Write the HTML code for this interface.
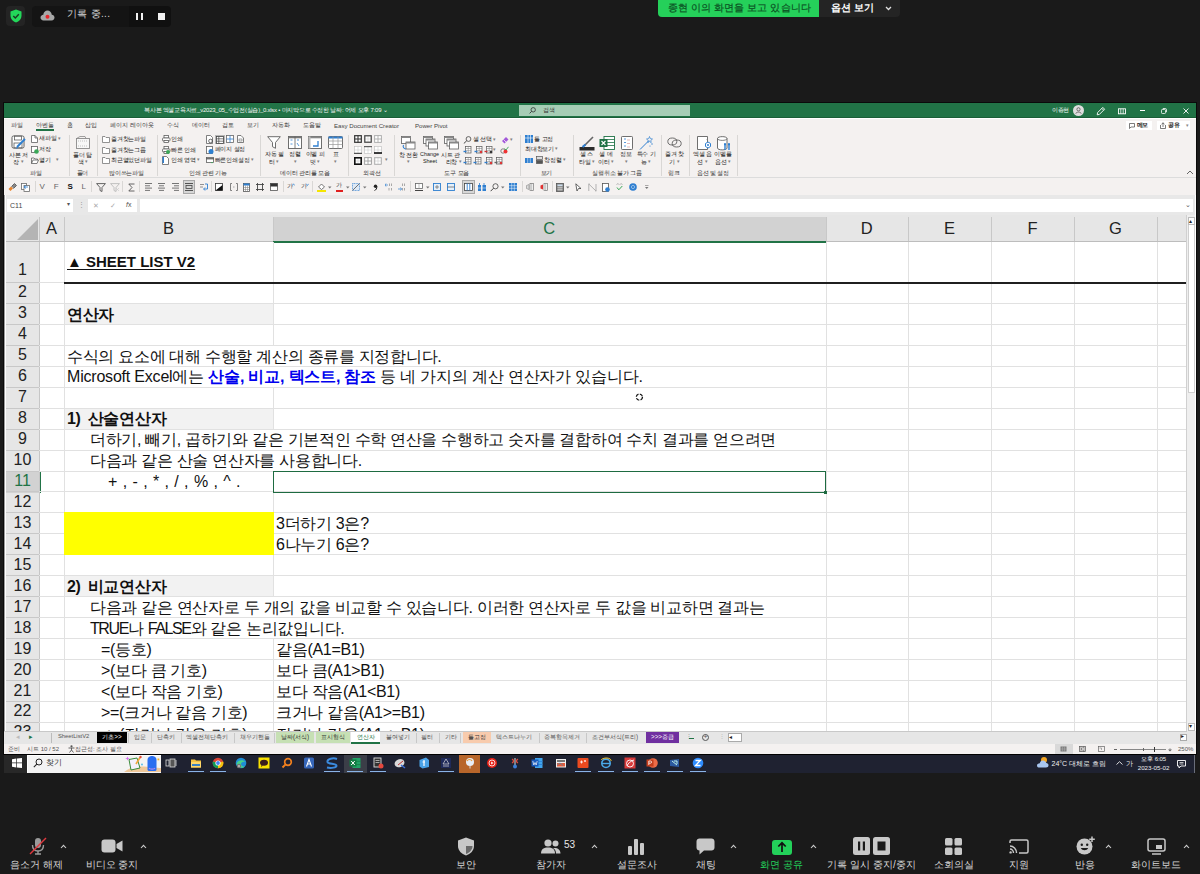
<!DOCTYPE html>
<html><head><meta charset="utf-8"><style>
html,body{margin:0;padding:0}
body{width:1200px;height:874px;overflow:hidden;background:#1a1a1a;position:relative;font-family:"Liberation Sans",sans-serif}
.a{position:absolute}
.t{position:absolute;white-space:nowrap;line-height:1}
</style></head><body>
<div class="a" style="left:6px;top:6px;width:19px;height:20px;background:#242424;border-radius:4px"></div>
<svg class="a" style="left:10px;top:9px" width="12" height="14" viewBox="0 0 12 14"><path d="M6 0.5 L11.5 2.5 V6.5 C11.5 10 9 12.5 6 13.5 C3 12.5 0.5 10 0.5 6.5 V2.5 Z" fill="#23d75a"/><path d="M3.3 7 L5.3 9 L8.8 5.2" stroke="#1a3a22" stroke-width="1.4" fill="none"/></svg>
<div class="a" style="left:32px;top:6px;width:97px;height:21px;background:#141414;border-radius:4px 0 0 4px"></div>
<div class="a" style="left:129px;top:6px;width:42px;height:21px;background:#101010;border-radius:0 4px 4px 0"></div>
<svg class="a" style="left:40px;top:10px" width="15" height="11" viewBox="0 0 15 11"><path d="M3.5 10.5 H11.5 C13.5 10.5 14.5 9 14.5 7.5 C14.5 6 13.3 4.8 11.8 4.8 C11.5 2.3 9.7 0.5 7.5 0.5 C5.3 0.5 3.5 2.3 3.3 4.8 C1.7 4.9 0.5 6.1 0.5 7.6 C0.5 9.2 1.8 10.5 3.5 10.5 Z" fill="#a8a8a8"/><circle cx="7.5" cy="6.8" r="2" fill="#e8262b"/></svg>
<div class="t" style="left:67px;top:9px;font-size:10px;color:#d6d6d6;font-weight:400;letter-spacing:0.3px">기록 중...</div>
<div class="a" style="left:136px;top:13px;width:2px;height:7px;background:#f0f0f0;"></div>
<div class="a" style="left:141px;top:13px;width:2px;height:7px;background:#f0f0f0;"></div>
<div class="a" style="left:158px;top:13px;width:7px;height:7px;background:#f0f0f0;"></div>
<div class="a" style="left:658px;top:0px;width:161px;height:17px;background:#25d05a;border-radius:0 0 0 4px"></div>
<div class="t" style="left:668px;top:3px;font-size:10px;color:#0b5223;font-weight:400;letter-spacing:0.1px;-webkit-text-stroke:0.2px #0b5223">종현 이의 화면을 보고 있습니다</div>
<div class="a" style="left:819px;top:0px;width:81px;height:17px;background:#242424;border-radius:0 0 4px 0"></div>
<div class="t" style="left:831px;top:3px;font-size:10px;color:#ffffff;font-weight:700;">옵션 보기</div>
<svg class="a" style="left:885px;top:6px" width="7" height="5" viewBox="0 0 7 5"><path d="M1 1 L3.5 3.5 L6 1" stroke="#e0e0e0" stroke-width="1.3" fill="none"/></svg>
<div class="a" style="left:3px;top:102px;width:1194px;height:653px;background:#0a0a0a;"></div>
<div class="a" style="left:4px;top:103px;width:1192px;height:16px;background:#217346;"></div>
<div class="a" style="left:4px;top:117px;width:1192px;height:1px;background:#1a5e37;"></div>
<div class="t" style="left:144px;top:107px;font-size:6px;color:#f4f4f4;font-weight:400;letter-spacing:-0.25px">복사본 엑셀교육자료_v2023_05_수업전(실습)_0.xlsx • 마지막으로 수정한 날짜: 어제 오후 7:09 ⌄</div>
<div class="a" style="left:519px;top:105px;width:171px;height:11px;background:#a6cdb5;"></div>
<svg class="a" style="left:529px;top:107px" width="7" height="7" viewBox="0 0 7 7"><circle cx="4.2" cy="2.8" r="2.2" stroke="#333" stroke-width="0.8" fill="none"/><path d="M2.6 4.4 L0.6 6.4" stroke="#333" stroke-width="0.9"/></svg>
<div class="t" style="left:543px;top:107px;font-size:6px;color:#333;font-weight:400;">검색</div>
<div class="t" style="left:1052px;top:107.3px;font-size:6.3px;color:#ffffff;font-weight:400;letter-spacing:-0.3px">이종현</div>
<div class="a" style="left:1072.5px;top:105px;width:11px;height:11px;border-radius:50%;background:#dedede"></div>
<svg class="a" style="left:1074.5px;top:107px" width="7" height="7" viewBox="0 0 7 7"><circle cx="3.5" cy="2.3" r="1.6" stroke="#555" stroke-width="0.8" fill="none"/><path d="M0.8 6.6 C1.1 4.6 5.9 4.6 6.2 6.6" stroke="#555" stroke-width="0.8" fill="none"/></svg>
<svg class="a" style="left:1095.5px;top:105.5px" width="10" height="10" viewBox="0 0 10 10"><path d="M1.2 8.8 L1.6 6.6 L6.8 1.4 L8.6 3.2 L3.4 8.4 Z M5.8 2.4 L7.6 4.2" stroke="#fff" stroke-width="0.9" fill="none"/></svg>
<svg class="a" style="left:1117.5px;top:107.5px" width="8" height="7" viewBox="0 0 8 7"><rect x="0.5" y="0.8" width="7" height="5" stroke="#fff" stroke-width="0.9" fill="none"/><path d="M2.8 0.8 V5.8 M5.2 0.8 V5.8" stroke="#fff" stroke-width="0.8"/></svg>
<div class="a" style="left:1140px;top:110px;width:5.3px;height:0.9px;background:#ffffff;"></div>
<svg class="a" style="left:1161px;top:107.5px" width="6" height="6" viewBox="0 0 6 6"><rect x="0.5" y="1.5" width="4" height="4" rx="0.8" stroke="#fff" stroke-width="0.8" fill="none"/><path d="M1.8 0.5 H4.5 C5 0.5 5.5 1 5.5 1.5 V4.2" stroke="#fff" stroke-width="0.8" fill="none"/></svg>
<svg class="a" style="left:1183px;top:107.5px" width="6" height="6" viewBox="0 0 6 6"><path d="M0.5 0.5 L5.5 5.5 M5.5 0.5 L0.5 5.5" stroke="#fff" stroke-width="0.9"/></svg>
<div class="a" style="left:4px;top:118px;width:1192px;height:61px;background:#f4f1f0;"></div>
<div class="a" style="left:4px;top:118px;width:1192px;height:1px;background:#ffffff;"></div>
<div class="t" style="left:11px;top:122.2px;font-size:6px;color:#3a3a3a;font-weight:400;letter-spacing:0.1px">파일</div>
<div class="t" style="left:36px;top:122.2px;font-size:6px;color:#3a3a3a;font-weight:400;letter-spacing:0.1px">아벤들</div>
<div class="t" style="left:67px;top:122.2px;font-size:6px;color:#3a3a3a;font-weight:400;letter-spacing:0.1px">홈</div>
<div class="t" style="left:85px;top:122.2px;font-size:6px;color:#3a3a3a;font-weight:400;letter-spacing:0.1px">삽입</div>
<div class="t" style="left:110px;top:122.2px;font-size:6px;color:#3a3a3a;font-weight:400;letter-spacing:0.1px">페이지 레이아웃</div>
<div class="t" style="left:167px;top:122.2px;font-size:6px;color:#3a3a3a;font-weight:400;letter-spacing:0.1px">수식</div>
<div class="t" style="left:192px;top:122.2px;font-size:6px;color:#3a3a3a;font-weight:400;letter-spacing:0.1px">데이터</div>
<div class="t" style="left:222px;top:122.2px;font-size:6px;color:#3a3a3a;font-weight:400;letter-spacing:0.1px">검토</div>
<div class="t" style="left:247px;top:122.2px;font-size:6px;color:#3a3a3a;font-weight:400;letter-spacing:0.1px">보기</div>
<div class="t" style="left:272px;top:122.2px;font-size:6px;color:#3a3a3a;font-weight:400;letter-spacing:0.1px">자동화</div>
<div class="t" style="left:303px;top:122.2px;font-size:6px;color:#3a3a3a;font-weight:400;letter-spacing:0.1px">도움말</div>
<div class="t" style="left:334px;top:122.5px;font-size:6.1px;color:#444;font-weight:400;">Easy Document Creator</div>
<div class="t" style="left:415px;top:122.5px;font-size:6.1px;color:#444;font-weight:400;">Power Pivot</div>
<div class="a" style="left:36px;top:129px;width:18px;height:2px;background:#217346;"></div>
<div class="a" style="left:1126px;top:120.7px;width:26px;height:9.5px;background:#ffffff;"></div>
<svg class="a" style="left:1129px;top:122.5px" width="6" height="6" viewBox="0 0 6 6"><path d="M0.5 0.5 H5.5 V4 H2 L0.5 5.5 Z" stroke="#444" stroke-width="0.7" fill="none"/></svg>
<div class="t" style="left:1136.5px;top:122.3px;font-size:6px;color:#222;font-weight:700;letter-spacing:-0.3px">메모</div>
<div class="a" style="left:1157.3px;top:120.7px;width:32.7px;height:9.5px;background:#ffffff;"></div>
<svg class="a" style="left:1160px;top:122px" width="6" height="7" viewBox="0 0 6 7"><path d="M0.5 3 V6.5 H5.5 V3 M3 5 V0.8 M1.5 2.2 L3 0.8 L4.5 2.2" stroke="#444" stroke-width="0.7" fill="none"/></svg>
<div class="t" style="left:1168px;top:122.3px;font-size:6px;color:#222;font-weight:700;letter-spacing:-0.3px">공유</div>
<div class="t" style="left:1185.5px;top:122.5px;font-size:5px;color:#888;font-weight:400;">▾</div>
<div class="a" style="left:4px;top:177px;width:1192px;height:1px;background:#dcdcdc;"></div>
<div class="a" style="left:68.5px;top:135px;width:1px;height:41px;background:#d9d7d5;"></div>
<div class="a" style="left:96.5px;top:135px;width:1px;height:41px;background:#d9d7d5;"></div>
<div class="a" style="left:156.5px;top:135px;width:1px;height:41px;background:#d9d7d5;"></div>
<div class="a" style="left:260px;top:135px;width:1px;height:41px;background:#d9d7d5;"></div>
<div class="a" style="left:347.5px;top:135px;width:1px;height:41px;background:#d9d7d5;"></div>
<div class="a" style="left:394px;top:135px;width:1px;height:41px;background:#d9d7d5;"></div>
<div class="a" style="left:519.5px;top:135px;width:1px;height:41px;background:#d9d7d5;"></div>
<div class="a" style="left:573px;top:135px;width:1px;height:41px;background:#d9d7d5;"></div>
<div class="a" style="left:660.5px;top:135px;width:1px;height:41px;background:#d9d7d5;"></div>
<div class="a" style="left:688.5px;top:135px;width:1px;height:41px;background:#d9d7d5;"></div>
<div class="a" style="left:736.5px;top:135px;width:1px;height:41px;background:#d9d7d5;"></div>
<div class="t" style="left:36px;top:170.1px;font-size:6px;color:#333333;font-weight:400;transform:translateX(-50%);letter-spacing:-0.2px;">파일</div>
<div class="t" style="left:82.5px;top:170.1px;font-size:6px;color:#333333;font-weight:400;transform:translateX(-50%);letter-spacing:-0.2px;">폴더</div>
<div class="t" style="left:126.4px;top:170.1px;font-size:6px;color:#333333;font-weight:400;transform:translateX(-50%);letter-spacing:-0.2px;">많이쓰는파일</div>
<div class="t" style="left:208px;top:170.1px;font-size:6px;color:#333333;font-weight:400;transform:translateX(-50%);letter-spacing:-0.2px;">인쇄 관련 기능</div>
<div class="t" style="left:305px;top:170.1px;font-size:6px;color:#333333;font-weight:400;transform:translateX(-50%);letter-spacing:-0.2px;">데이터 관리를 모음</div>
<div class="t" style="left:371.8px;top:170.1px;font-size:6px;color:#333333;font-weight:400;transform:translateX(-50%);letter-spacing:-0.2px;">외곽선</div>
<div class="t" style="left:456.8px;top:170.1px;font-size:6px;color:#333333;font-weight:400;transform:translateX(-50%);letter-spacing:-0.2px;">도구 모음</div>
<div class="t" style="left:546.4px;top:170.1px;font-size:6px;color:#333333;font-weight:400;transform:translateX(-50%);letter-spacing:-0.2px;">보기</div>
<div class="t" style="left:617px;top:170.1px;font-size:6px;color:#333333;font-weight:400;transform:translateX(-50%);letter-spacing:-0.2px;">실행취소 불가 그룹</div>
<div class="t" style="left:674px;top:170.1px;font-size:6px;color:#333333;font-weight:400;transform:translateX(-50%);letter-spacing:-0.2px;">링크</div>
<div class="t" style="left:713px;top:170.1px;font-size:6px;color:#333333;font-weight:400;transform:translateX(-50%);letter-spacing:-0.2px;">옵션 및 설정</div>
<svg class="a" style="left:11px;top:135px" width="15" height="15" viewBox="0 0 15 15"><rect x="1" y="1" width="12" height="12" rx="1.5" stroke="#5f5f5f" stroke-width="1" fill="#fff"/><rect x="3.5" y="1" width="7" height="4" stroke="#5f5f5f" stroke-width="0.8" fill="none"/><rect x="3" y="8" width="8" height="5" stroke="#5f5f5f" stroke-width="0.8" fill="none"/><path d="M14 4 L6 12" stroke="#2f7fd0" stroke-width="2"/><path d="M6.5 11.5 L4.5 14 L7 13" fill="#2f7fd0"/></svg>
<div class="t" style="left:18.3px;top:151.7px;font-size:6px;color:#222222;font-weight:400;transform:translateX(-50%);letter-spacing:-0.2px;">사본 저</div>
<div class="t" style="left:18.4px;top:158.5px;font-size:6px;color:#222222;font-weight:400;transform:translateX(-50%);letter-spacing:-0.2px;">장 <span style="color:#808080;font-size:5px;position:relative;top:-0.5px">▾</span></div>
<svg class="a" style="left:31px;top:135px" width="7" height="8" viewBox="0 0 7 8"><path d="M0.5 0.5 H4 L6.5 3 V7.5 H0.5 Z M4 0.5 V3 H6.5" stroke="#5f5f5f" stroke-width="0.8" fill="#fff"/></svg>
<div class="t" style="left:39.2px;top:135.3px;font-size:6px;color:#222222;font-weight:400;letter-spacing:-0.2px;">새파일 <span style="color:#808080;font-size:5px;position:relative;top:-0.5px">▾</span></div>
<svg class="a" style="left:31px;top:146px" width="8" height="8" viewBox="0 0 8 8"><rect x="0.5" y="0.5" width="6" height="6" stroke="#5f5f5f" stroke-width="0.8" fill="#fff"/><circle cx="5.5" cy="5.5" r="2.3" fill="#3aa757"/></svg>
<div class="t" style="left:39.2px;top:146.1px;font-size:6px;color:#222222;font-weight:400;letter-spacing:-0.2px;">저장</div>
<svg class="a" style="left:31px;top:157px" width="8" height="7" viewBox="0 0 8 7"><path d="M0.5 6.5 V1 H3 L4 2 H6.5 V3 M0.5 6.5 L2 3 H7.5 L6 6.5 Z" stroke="#5f5f5f" stroke-width="0.8" fill="#fff"/></svg>
<div class="t" style="left:39.2px;top:156.9px;font-size:6px;color:#222222;font-weight:400;letter-spacing:-0.2px;">열기</div>
<div class="t" style="left:55.5px;top:156.9px;font-size:6px;color:#222222;font-weight:400;letter-spacing:-0.2px;"><span style="color:#808080;font-size:5px;position:relative;top:-0.5px">▾</span></div>
<svg class="a" style="left:76px;top:136px" width="14" height="13" viewBox="0 0 14 13"><rect x="0.5" y="2.5" width="13" height="10" stroke="#8a8a8a" stroke-width="0.9" fill="#f7f7f7"/><path d="M0.5 2.5 L4 0.5 H9 L10 2.5" stroke="#8a8a8a" stroke-width="0.8" fill="none"/><path d="M2 5 H12 M2 10 H12" stroke="#aaa" stroke-width="0.7" stroke-dasharray="1 1"/></svg>
<div class="t" style="left:82.8px;top:151.5px;font-size:6px;color:#222222;font-weight:400;transform:translateX(-50%);letter-spacing:-0.2px;">폴더 탐</div>
<div class="t" style="left:82.8px;top:158.5px;font-size:6px;color:#222222;font-weight:400;transform:translateX(-50%);letter-spacing:-0.2px;">색 <span style="color:#808080;font-size:5px;position:relative;top:-0.5px">▾</span></div>
<svg class="a" style="left:101.5px;top:135.5px" width="8" height="7" viewBox="0 0 8 7"><path d="M0.5 6.5 V0.5 H3 L4 1.5 H7.5 V6.5 Z" stroke="#777" stroke-width="0.8" fill="#fff"/></svg>
<div class="t" style="left:111px;top:135.5px;font-size:6px;color:#222222;font-weight:400;letter-spacing:-0.2px;">즐겨찾는파일</div>
<svg class="a" style="left:101.5px;top:146.5px" width="8" height="7" viewBox="0 0 8 7"><path d="M0.5 6.5 V0.5 H3 L4 1.5 H7.5 V6.5 Z" stroke="#777" stroke-width="0.8" fill="#fff"/></svg>
<div class="t" style="left:111px;top:146.5px;font-size:6px;color:#222222;font-weight:400;letter-spacing:-0.2px;">즐겨찾는그룹</div>
<svg class="a" style="left:101.5px;top:156.8px" width="8" height="7" viewBox="0 0 8 7"><path d="M0.5 6.5 V0.5 H3 L4 1.5 H7.5 V6.5 Z" stroke="#777" stroke-width="0.8" fill="#fff"/></svg>
<div class="t" style="left:111px;top:156.8px;font-size:6px;color:#222222;font-weight:400;letter-spacing:-0.2px;">최근열었던파일</div>
<svg class="a" style="left:161.5px;top:135px" width="9" height="8" viewBox="0 0 9 8"><rect x="2" y="0.5" width="4.5" height="2.5" stroke="#5f5f5f" stroke-width="0.8" fill="#fff"/><rect x="0.5" y="3" width="7.5" height="3" rx="0.8" stroke="#5f5f5f" stroke-width="0.8" fill="#fff"/><rect x="2" y="5.5" width="4.5" height="2" stroke="#5f5f5f" stroke-width="0.8" fill="#fff"/></svg>
<div class="t" style="left:171px;top:135.5px;font-size:6px;color:#222222;font-weight:400;letter-spacing:-0.2px;">인쇄</div>
<svg class="a" style="left:161.5px;top:146px" width="9" height="8" viewBox="0 0 9 8"><rect x="2" y="0.5" width="4.5" height="2.5" stroke="#5f5f5f" stroke-width="0.8" fill="#fff"/><rect x="0.5" y="3" width="7.5" height="3" rx="0.8" stroke="#5f5f5f" stroke-width="0.8" fill="#fff"/><rect x="2" y="5.5" width="4.5" height="2" stroke="#5f5f5f" stroke-width="0.8" fill="#fff"/><circle cx="6" cy="6" r="2" fill="#3aa757"/></svg>
<div class="t" style="left:171px;top:146.5px;font-size:6px;color:#222222;font-weight:400;letter-spacing:-0.2px;">빠른 인쇄</div>
<svg class="a" style="left:162px;top:156px" width="8" height="9" viewBox="0 0 8 9"><path d="M0.5 0.5 H4.5 L6.5 2.5 V8.5 H0.5 Z" stroke="#5f5f5f" stroke-width="0.8" fill="#fff"/><rect x="0.5" y="1" width="1.5" height="6" fill="#2f7fd0"/></svg>
<div class="t" style="left:171px;top:156.8px;font-size:6px;color:#222222;font-weight:400;letter-spacing:-0.2px;">인쇄 영역 <span style="color:#808080;font-size:5px;position:relative;top:-0.5px">▾</span></div>
<div class="a" style="left:214.5px;top:134.5px;width:10.5px;height:9.5px;background:#d5d5d5;border:1px solid #b8b8b8;box-sizing:border-box"></div>
<svg class="a" style="left:206px;top:135px" width="8" height="9" viewBox="0 0 8 9"><path d="M0.5 0.5 H4.5 L6.5 2.5 V8.5 H0.5 Z" stroke="#5f5f5f" stroke-width="0.8" fill="#fff"/><circle cx="4.5" cy="6" r="1.8" stroke="#333" stroke-width="0.7" fill="none"/></svg>
<svg class="a" style="left:216px;top:135.5px" width="8" height="8" viewBox="0 0 8 8"><rect x="0.5" y="0.5" width="7" height="7" stroke="#444" stroke-width="0.8" fill="#fff"/><path d="M0.5 2.8 H7.5 M0.5 5.2 H7.5 M2.8 0.5 V7.5" stroke="#444" stroke-width="0.7"/></svg>
<svg class="a" style="left:226px;top:135px" width="8" height="8" viewBox="0 0 8 8"><rect x="0.5" y="0.5" width="7" height="7" stroke="#666" stroke-width="0.8" fill="#fff"/><path d="M0.5 4 H7.5 M4 0.5 V7.5" stroke="#2f7fd0" stroke-width="0.8"/></svg>
<svg class="a" style="left:237px;top:135px" width="7" height="8" viewBox="0 0 7 8"><path d="M0.5 0.5 H4 L6.5 3 V7.5 H0.5 Z" stroke="#5f5f5f" stroke-width="0.8" fill="#fff"/><rect x="2" y="4" width="3" height="2" stroke="#555" stroke-width="0.5" fill="none"/></svg>
<svg class="a" style="left:206px;top:146px" width="8" height="8" viewBox="0 0 8 8"><rect x="0.5" y="0.5" width="6" height="7" stroke="#5f5f5f" stroke-width="0.8" fill="#fff"/><circle cx="5" cy="5.5" r="2.5" fill="#2f7fd0"/></svg>
<div class="t" style="left:214.7px;top:146.2px;font-size:6px;color:#222222;font-weight:400;letter-spacing:-0.2px;">페이지 설정</div>
<svg class="a" style="left:205.5px;top:157px" width="8" height="7" viewBox="0 0 8 7"><rect x="0.5" y="0.5" width="7" height="5" stroke="#5f5f5f" stroke-width="0.8" fill="#fff"/><path d="M0.5 1.8 H7.5" stroke="#333" stroke-width="1"/><path d="M5 5 L6 6.5 L7 5" fill="#3aa757"/></svg>
<div class="t" style="left:214.7px;top:156.8px;font-size:6px;color:#222222;font-weight:400;letter-spacing:-0.2px;">빠른인쇄설정 <span style="color:#808080;font-size:5px;position:relative;top:-0.5px">▾</span></div>
<svg class="a" style="left:267px;top:136px" width="14" height="13" viewBox="0 0 14 13"><path d="M0.7 0.7 H13.3 L8.5 6.5 V12.3 L5.5 10.7 V6.5 Z" stroke="#5f5f5f" stroke-width="0.9" fill="#fff"/></svg>
<div class="t" style="left:274.2px;top:151.4px;font-size:6px;color:#222222;font-weight:400;transform:translateX(-50%);letter-spacing:-0.2px;">자동 필</div>
<div class="t" style="left:274px;top:158.5px;font-size:6px;color:#222222;font-weight:400;transform:translateX(-50%);letter-spacing:-0.2px;">터 <span style="color:#808080;font-size:5px;position:relative;top:-0.5px">▾</span></div>
<svg class="a" style="left:288px;top:136px" width="14" height="13" viewBox="0 0 14 13"><rect x="0.5" y="0.5" width="13" height="12" stroke="#5f5f5f" stroke-width="0.9" fill="#fff"/><rect x="0.5" y="0.5" width="13" height="1.8" fill="#777"/><path d="M7 0.5 V12.5" stroke="#5f5f5f" stroke-width="0.8"/><path d="M2.5 4 H4.5 M2.5 8 H4.5 M9 4 H11 M9 7 L11 10" stroke="#2f7fd0" stroke-width="0.8"/></svg>
<div class="t" style="left:295px;top:151.4px;font-size:6px;color:#222222;font-weight:400;transform:translateX(-50%);letter-spacing:-0.2px;">정렬</div>
<div class="t" style="left:295px;top:158.5px;font-size:6px;color:#222222;font-weight:400;transform:translateX(-50%);letter-spacing:-0.2px;"><span style="color:#808080;font-size:5px;position:relative;top:-0.5px">▾</span></div>
<svg class="a" style="left:308px;top:136px" width="14" height="13" viewBox="0 0 14 13"><rect x="0.5" y="0.5" width="13" height="12" stroke="#5f5f5f" stroke-width="0.9" fill="#fff"/><rect x="0.5" y="0.5" width="13" height="1.8" fill="#888"/><rect x="0.5" y="0.5" width="2" height="12" fill="#bbb"/><path d="M5 10 H10 V5" stroke="#2f7fd0" stroke-width="1.3" fill="none"/></svg>
<div class="t" style="left:315px;top:151.4px;font-size:6px;color:#222222;font-weight:400;transform:translateX(-50%);letter-spacing:-0.2px;">이벨 피</div>
<div class="t" style="left:315px;top:158.5px;font-size:6px;color:#222222;font-weight:400;transform:translateX(-50%);letter-spacing:-0.2px;">벗 <span style="color:#808080;font-size:5px;position:relative;top:-0.5px">▾</span></div>
<svg class="a" style="left:328px;top:136px" width="15" height="13" viewBox="0 0 15 13"><rect x="0.5" y="0.5" width="14" height="12" rx="1" stroke="#5f5f5f" stroke-width="0.9" fill="#fff"/><rect x="0.5" y="0.5" width="14" height="2" fill="#2f7fd0"/><path d="M0.5 5 H14.5 M0.5 8.5 H14.5 M5 0.5 V12.5 M10 0.5 V12.5" stroke="#999" stroke-width="0.7"/></svg>
<div class="t" style="left:335.6px;top:151.4px;font-size:6px;color:#222222;font-weight:400;transform:translateX(-50%);letter-spacing:-0.2px;">표</div>
<div class="t" style="left:335.6px;top:158.5px;font-size:6px;color:#222222;font-weight:400;transform:translateX(-50%);letter-spacing:-0.2px;"><span style="color:#808080;font-size:5px;position:relative;top:-0.5px">▾</span></div>
<svg class="a" style="left:354px;top:135.2px" width="8" height="8" viewBox="0 0 8 8"><rect x="0.5" y="0.5" width="7" height="7" stroke="#bbb" stroke-width="0.6" fill="#fff"/><path d="M0.5 4 H7.5 M4 0.5 V7.5" stroke="#ccc" stroke-width="0.6"/><rect x="0.7" y="0.7" width="6.6" height="6.6" stroke="#333" stroke-width="1.2" fill="none"/><path d="M0.5 4 H7.5 M4 0.5 V7.5" stroke="#333" stroke-width="0.96"/></svg>
<svg class="a" style="left:364.2px;top:135.2px" width="8" height="8" viewBox="0 0 8 8"><rect x="0.5" y="0.5" width="7" height="7" stroke="#bbb" stroke-width="0.6" fill="#fff"/><path d="M0.5 4 H7.5 M4 0.5 V7.5" stroke="#ccc" stroke-width="0.6"/><rect x="0.8" y="0.8" width="6.4" height="6.4" stroke="#444" stroke-width="1.2" fill="none"/></svg>
<svg class="a" style="left:374.4px;top:135.2px" width="8" height="8" viewBox="0 0 8 8"><rect x="0.5" y="0.5" width="7" height="7" stroke="#bbb" stroke-width="0.6" fill="#fff"/><path d="M0.5 4 H7.5 M4 0.5 V7.5" stroke="#ccc" stroke-width="0.6"/><rect x="0.7" y="0.7" width="6.6" height="6.6" stroke="#aaa" stroke-width="0.8" fill="none"/><path d="M0.5 4 H7.5 M4 0.5 V7.5" stroke="#aaa" stroke-width="0.6400000000000001"/></svg>
<svg class="a" style="left:354px;top:146px" width="8" height="8" viewBox="0 0 8 8"><rect x="0.5" y="0.5" width="7" height="7" stroke="#bbb" stroke-width="0.6" fill="#fff"/><path d="M0.5 4 H7.5 M4 0.5 V7.5" stroke="#ccc" stroke-width="0.6"/><path d="M0 7.3 H8" stroke="#333" stroke-width="1"/></svg>
<svg class="a" style="left:364.2px;top:146px" width="8" height="8" viewBox="0 0 8 8"><rect x="0.5" y="0.5" width="7" height="7" stroke="#bbb" stroke-width="0.6" fill="#fff"/><path d="M0.5 4 H7.5 M4 0.5 V7.5" stroke="#ccc" stroke-width="0.6"/><path d="M0 0.7 H8" stroke="#444" stroke-width="1"/></svg>
<svg class="a" style="left:374.4px;top:146px" width="8" height="8" viewBox="0 0 8 8"><rect x="0.5" y="0.5" width="7" height="7" stroke="#bbb" stroke-width="0.6" fill="#fff"/><path d="M0.5 4 H7.5 M4 0.5 V7.5" stroke="#ccc" stroke-width="0.6"/><path d="M0 7 H8" stroke="#111" stroke-width="1.6"/></svg>
<svg class="a" style="left:354px;top:156.7px" width="8" height="8" viewBox="0 0 8 8"><rect x="0.5" y="0.5" width="7" height="7" stroke="#bbb" stroke-width="0.6" fill="#fff"/><path d="M0.5 4 H7.5 M4 0.5 V7.5" stroke="#ccc" stroke-width="0.6"/><rect x="0.8" y="0.8" width="6.4" height="6.4" stroke="#111" stroke-width="1.6" fill="none"/></svg>
<svg class="a" style="left:364.2px;top:156.7px" width="8" height="8" viewBox="0 0 8 8"><rect x="0.5" y="0.5" width="7" height="7" stroke="#bbb" stroke-width="0.6" fill="#fff"/><path d="M0.5 4 H7.5 M4 0.5 V7.5" stroke="#ccc" stroke-width="0.6"/><rect x="0.7" y="0.7" width="6.6" height="6.6" stroke="#999" stroke-width="0.8" fill="none"/><path d="M0.5 4 H7.5 M4 0.5 V7.5" stroke="#999" stroke-width="0.6400000000000001"/></svg>
<svg class="a" style="left:374.4px;top:156.7px" width="8" height="8" viewBox="0 0 8 8"><rect x="0.5" y="0.5" width="7" height="7" stroke="#bbb" stroke-width="0.6" fill="#fff"/><path d="M0.5 4 H7.5 M4 0.5 V7.5" stroke="#ccc" stroke-width="0.6"/><rect x="0.8" y="0.8" width="6.4" height="6.4" stroke="#aaa" stroke-width="0.8" fill="none"/></svg>
<div class="t" style="left:386.5px;top:156.9px;font-size:6px;color:#555;font-weight:400;transform:translateX(-50%);letter-spacing:-0.2px;"><span style="color:#808080;font-size:5px;position:relative;top:-0.5px">▾</span></div>
<svg class="a" style="left:401px;top:136px" width="15" height="14" viewBox="0 0 15 14"><g transform="translate(0,0)"><rect x="0.5" y="0.5" width="9" height="7" stroke="#5f5f5f" stroke-width="0.8" fill="#fff"/><rect x="0.5" y="0.5" width="9" height="1.5" fill="#888"/></g><g transform="translate(4.5,5.5)"><rect x="0.5" y="0.5" width="9" height="7" stroke="#5f5f5f" stroke-width="0.8" fill="#fff"/><rect x="0.5" y="0.5" width="9" height="1.5" fill="#888"/></g><path d="M2.5 9 C1.5 11 3 13 5 13" stroke="#2f7fd0" stroke-width="1.1" fill="none"/></svg>
<div class="t" style="left:408.3px;top:151.8px;font-size:6px;color:#222222;font-weight:400;transform:translateX(-50%);letter-spacing:-0.2px;">창 전환</div>
<div class="t" style="left:408.5px;top:158.5px;font-size:6px;color:#222222;font-weight:400;transform:translateX(-50%);letter-spacing:-0.2px;"><span style="color:#808080;font-size:5px;position:relative;top:-0.5px">▾</span></div>
<svg class="a" style="left:422.5px;top:136px" width="15" height="14" viewBox="0 0 15 14"><g><rect x="0.5" y="0.5" width="9" height="7" stroke="#5f5f5f" stroke-width="0.8" fill="#fff"/><rect x="0.5" y="0.5" width="9" height="1.5" fill="#888"/></g><g transform="translate(2.5,2.5)"><rect x="0.5" y="0.5" width="9" height="7" stroke="#5f5f5f" stroke-width="0.8" fill="#fff"/><rect x="0.5" y="0.5" width="9" height="1.5" fill="#888"/></g><g transform="translate(5,5.5)"><rect x="0.5" y="0.5" width="9" height="7" stroke="#5f5f5f" stroke-width="0.8" fill="#fff"/><rect x="0.5" y="0.5" width="9" height="1.5" fill="#888"/></g></svg>
<div class="t" style="left:429.5px;top:152.0px;font-size:5.4px;color:#222222;font-weight:400;transform:translateX(-50%);letter-spacing:-0.2px;letter-spacing:0">Change</div>
<div class="t" style="left:430px;top:158.7px;font-size:5.4px;color:#222222;font-weight:400;transform:translateX(-50%);letter-spacing:-0.2px;letter-spacing:0">Sheet</div>
<svg class="a" style="left:443.5px;top:136px" width="15" height="14" viewBox="0 0 15 14"><g><rect x="0.5" y="0.5" width="9" height="7" stroke="#5f5f5f" stroke-width="0.8" fill="#fff"/><rect x="0.5" y="0.5" width="9" height="1.5" fill="#888"/></g><g transform="translate(2.5,2.5)"><rect x="0.5" y="0.5" width="9" height="7" stroke="#5f5f5f" stroke-width="0.8" fill="#fff"/><rect x="0.5" y="0.5" width="9" height="1.5" fill="#888"/></g><g transform="translate(5,5.5)"><rect x="0.5" y="0.5" width="9" height="7" stroke="#5f5f5f" stroke-width="0.8" fill="#fff"/><rect x="0.5" y="0.5" width="9" height="1.5" fill="#888"/></g></svg>
<div class="t" style="left:450.6px;top:151.8px;font-size:6px;color:#222222;font-weight:400;transform:translateX(-50%);letter-spacing:-0.2px;">시트 관</div>
<div class="t" style="left:453.5px;top:158.5px;font-size:6px;color:#222222;font-weight:400;transform:translateX(-50%);letter-spacing:-0.2px;">리창 <span style="color:#808080;font-size:5px;position:relative;top:-0.5px">▾</span></div>
<svg class="a" style="left:463px;top:136px" width="9" height="8" viewBox="0 0 9 8"><circle cx="5.5" cy="3" r="2.4" stroke="#444" stroke-width="0.8" fill="none"/><path d="M3.7 4.8 L0.8 7.5" stroke="#444" stroke-width="1"/></svg>
<div class="t" style="left:472.5px;top:136.1px;font-size:6px;color:#222222;font-weight:400;letter-spacing:-0.2px;">셀 선택 <span style="color:#808080;font-size:5px;position:relative;top:-0.5px">▾</span></div>
<svg class="a" style="left:500.5px;top:135.5px" width="8" height="8" viewBox="0 0 8 8"><path d="M1 5 L5 1 L7.5 3.5 L3.5 7.5 Z" fill="#a259d9"/><path d="M2.5 3.5 L5 6" stroke="#fff" stroke-width="0.7"/></svg>
<div class="t" style="left:510px;top:136.1px;font-size:6px;color:#222222;font-weight:400;letter-spacing:-0.2px;"><span style="color:#808080;font-size:5px;position:relative;top:-0.5px">▾</span></div>
<svg class="a" style="left:463px;top:146px" width="9" height="8" viewBox="0 0 9 8"><rect x="2.5" y="0.5" width="5.5" height="6.5" stroke="#555" stroke-width="0.7" fill="#fff"/><path d="M2.5 2.5 H8 M2.5 4.7 H8 M5.2 0.5 V7" stroke="#777" stroke-width="0.5"/><path d="M0.5 5.5 H3.5" stroke="#2f7fd0" stroke-width="1.4"/><circle cx="7" cy="6" r="1.2" fill="transparent"/></svg>
<svg class="a" style="left:474px;top:146px" width="9" height="8" viewBox="0 0 9 8"><rect x="2.5" y="0.5" width="5.5" height="6.5" stroke="#555" stroke-width="0.7" fill="#fff"/><path d="M2.5 2.5 H8 M2.5 4.7 H8 M5.2 0.5 V7" stroke="#777" stroke-width="0.5"/><path d="M0.5 5.5 H3.5" stroke="#2f7fd0" stroke-width="1.4"/><circle cx="7" cy="6" r="1.2" fill="#d33"/></svg>
<svg class="a" style="left:483.5px;top:146px" width="9" height="8" viewBox="0 0 9 8"><rect x="2.5" y="0.5" width="5.5" height="6.5" stroke="#555" stroke-width="0.7" fill="#fff"/><path d="M2.5 2.5 H8 M2.5 4.7 H8 M5.2 0.5 V7" stroke="#777" stroke-width="0.5"/><path d="M0.5 5.5 H3.5" stroke="#c33" stroke-width="1.4"/><circle cx="7" cy="6" r="1.2" fill="#333"/></svg>
<div class="t" style="left:493px;top:146.1px;font-size:6px;color:#222222;font-weight:400;letter-spacing:-0.2px;"><span style="color:#808080;font-size:5px;position:relative;top:-0.5px">▾</span></div>
<svg class="a" style="left:500px;top:146px" width="9" height="8" viewBox="0 0 9 8"><circle cx="3" cy="5" r="2.2" stroke="#666" stroke-width="0.8" fill="none"/><circle cx="5.5" cy="5.5" r="2" fill="#e33"/><path d="M4.5 2.5 L6 4 L8.5 0.8" stroke="#3aa757" stroke-width="0.9" fill="none"/></svg>
<svg class="a" style="left:463px;top:156.5px" width="9" height="8" viewBox="0 0 9 8"><rect x="2.5" y="0.5" width="5.5" height="6.5" stroke="#555" stroke-width="0.7" fill="#fff"/><path d="M2.5 2.5 H8 M2.5 4.7 H8 M5.2 0.5 V7" stroke="#777" stroke-width="0.5"/><path d="M0.5 5.5 H3.5" stroke="#2f7fd0" stroke-width="1.4"/><circle cx="7" cy="6" r="1.2" fill="transparent"/></svg>
<svg class="a" style="left:473px;top:156.5px" width="9" height="8" viewBox="0 0 9 8"><rect x="2.5" y="0.5" width="5.5" height="6.5" stroke="#555" stroke-width="0.7" fill="#fff"/><path d="M2.5 2.5 H8 M2.5 4.7 H8 M5.2 0.5 V7" stroke="#777" stroke-width="0.5"/><path d="M0.5 5.5 H3.5" stroke="#2f7fd0" stroke-width="1.4"/><circle cx="7" cy="6" r="1.2" fill="transparent"/></svg>
<svg class="a" style="left:483.5px;top:156.5px" width="9" height="8" viewBox="0 0 9 8"><rect x="2.5" y="0.5" width="5.5" height="6.5" stroke="#555" stroke-width="0.7" fill="#fff"/><path d="M2.5 2.5 H8 M2.5 4.7 H8 M5.2 0.5 V7" stroke="#777" stroke-width="0.5"/><path d="M0.5 5.5 H3.5" stroke="#2f7fd0" stroke-width="1.4"/><circle cx="7" cy="6" r="1.2" fill="#d33"/></svg>
<svg class="a" style="left:493.5px;top:156.5px" width="9" height="8" viewBox="0 0 9 8"><rect x="2.5" y="0.5" width="5.5" height="6.5" stroke="#555" stroke-width="0.7" fill="#fff"/><path d="M2.5 2.5 H8 M2.5 4.7 H8 M5.2 0.5 V7" stroke="#777" stroke-width="0.5"/><path d="M0.5 5.5 H3.5" stroke="#666" stroke-width="1.4"/><circle cx="7" cy="6" r="1.2" fill="#d33"/></svg>
<svg class="a" style="left:524.5px;top:135px" width="9" height="8" viewBox="0 0 9 8"><rect x="0" y="0" width="8" height="8" fill="#2f7fd0"/><path d="M3 0 V8 M5.5 0 V8 M0 3 H8" stroke="#fff" stroke-width="0.6"/></svg>
<div class="t" style="left:534.3px;top:135.9px;font-size:6px;color:#222222;font-weight:400;letter-spacing:-0.2px;">틀 고정</div>
<div class="t" style="left:525px;top:145.9px;font-size:6px;color:#222222;font-weight:400;letter-spacing:-0.2px;">최대창보기 <span style="color:#808080;font-size:5px;position:relative;top:-0.5px">▾</span></div>
<svg class="a" style="left:524.5px;top:157.5px" width="9" height="5" viewBox="0 0 9 5"><rect x="0" y="0" width="8" height="5" fill="#2f7fd0"/><path d="M2.7 0 V5 M5.3 0 V5" stroke="#fff" stroke-width="0.5"/></svg>
<svg class="a" style="left:535.5px;top:156px" width="7" height="8" viewBox="0 0 7 8"><rect x="0.5" y="0.5" width="6" height="3" stroke="#555" stroke-width="0.7" fill="#ddd"/><rect x="0.5" y="4.5" width="6" height="3" stroke="#555" stroke-width="0.7" fill="#555"/></svg>
<div class="t" style="left:544px;top:156.5px;font-size:6px;color:#222222;font-weight:400;letter-spacing:-0.2px;">창정렬 <span style="color:#808080;font-size:5px;position:relative;top:-0.5px">▾</span></div>
<svg class="a" style="left:579px;top:135.5px" width="16" height="15" viewBox="0 0 16 15"><rect x="0.5" y="11" width="15" height="3.5" fill="#2b2b2b"/><path d="M14 1 L5 10" stroke="#666" stroke-width="1.6"/><path d="M6.5 8.5 L3.5 11" stroke="#2f7fd0" stroke-width="2.2"/></svg>
<div class="t" style="left:586.7px;top:151.4px;font-size:6px;color:#222222;font-weight:400;transform:translateX(-50%);letter-spacing:-0.2px;">셀 스</div>
<div class="t" style="left:586.7px;top:158.5px;font-size:6px;color:#222222;font-weight:400;transform:translateX(-50%);letter-spacing:-0.2px;">타일 <span style="color:#808080;font-size:5px;position:relative;top:-0.5px">▾</span></div>
<svg class="a" style="left:598.5px;top:135.5px" width="16" height="14" viewBox="0 0 16 14"><rect x="5" y="0.5" width="10.5" height="13" stroke="#1e7145" stroke-width="0.9" fill="#fff"/><path d="M5 3.5 H15.5 M5 6.5 H15.5 M5 9.5 H15.5" stroke="#1e7145" stroke-width="0.8"/><rect x="0.5" y="3" width="8" height="8" fill="#1e7145"/><path d="M2.5 5 L6.5 9 M6.5 5 L2.5 9" stroke="#fff" stroke-width="1.1"/></svg>
<div class="t" style="left:606px;top:151.4px;font-size:6px;color:#222222;font-weight:400;transform:translateX(-50%);letter-spacing:-0.2px;">셀 데</div>
<div class="t" style="left:606px;top:158.5px;font-size:6px;color:#222222;font-weight:400;transform:translateX(-50%);letter-spacing:-0.2px;">이터 <span style="color:#808080;font-size:5px;position:relative;top:-0.5px">▾</span></div>
<svg class="a" style="left:620.5px;top:135.5px" width="12" height="14" viewBox="0 0 12 14"><rect x="0.5" y="0.5" width="11" height="13" rx="0.8" stroke="#5f5f5f" stroke-width="0.9" fill="#fff"/><path d="M3 3 H5 M3 6.5 H5 M3 10 H5" stroke="#2f7fd0" stroke-width="0.8"/><path d="M6 4 H9 M6 7.5 H9 M6 11 H9" stroke="#c77" stroke-width="0.5"/></svg>
<div class="t" style="left:626px;top:151.4px;font-size:6px;color:#222222;font-weight:400;transform:translateX(-50%);letter-spacing:-0.2px;">정보</div>
<div class="t" style="left:626px;top:158.5px;font-size:6px;color:#222222;font-weight:400;transform:translateX(-50%);letter-spacing:-0.2px;"><span style="color:#808080;font-size:5px;position:relative;top:-0.5px">▾</span></div>
<svg class="a" style="left:639px;top:135.5px" width="15" height="14" viewBox="0 0 15 14"><path d="M1 13.5 L10 4.5" stroke="#2f7fd0" stroke-width="1"/><path d="M10.5 0.5 L11.3 2.6 L13.5 3 L11.8 4.4 L12.2 6.6 L10.5 5.5 L8.8 6.6 L9.2 4.4 L7.5 3 L9.7 2.6 Z" stroke="#2f7fd0" stroke-width="0.7" fill="none"/><circle cx="13" cy="8" r="0.7" fill="#2f7fd0"/><circle cx="11" cy="10" r="0.6" fill="#2f7fd0"/></svg>
<div class="t" style="left:646px;top:151.4px;font-size:6px;color:#222222;font-weight:400;transform:translateX(-50%);letter-spacing:-0.2px;">특수 기</div>
<div class="t" style="left:646px;top:158.5px;font-size:6px;color:#222222;font-weight:400;transform:translateX(-50%);letter-spacing:-0.2px;">능 <span style="color:#808080;font-size:5px;position:relative;top:-0.5px">▾</span></div>
<svg class="a" style="left:667px;top:137px" width="15" height="11" viewBox="0 0 15 11"><ellipse cx="5.3" cy="4.5" rx="4.5" ry="3.5" stroke="#5f5f5f" stroke-width="0.9" fill="none"/><ellipse cx="9.7" cy="6.5" rx="4.5" ry="3.5" stroke="#5f5f5f" stroke-width="0.9" fill="none"/></svg>
<div class="t" style="left:674.4px;top:151.4px;font-size:6px;color:#222222;font-weight:400;transform:translateX(-50%);letter-spacing:-0.2px;">즐겨 찾</div>
<div class="t" style="left:674.4px;top:158.5px;font-size:6px;color:#222222;font-weight:400;transform:translateX(-50%);letter-spacing:-0.2px;">기 <span style="color:#808080;font-size:5px;position:relative;top:-0.5px">▾</span></div>
<svg class="a" style="left:696.5px;top:135.5px" width="16" height="15" viewBox="0 0 16 15"><path d="M0.5 0.5 H10.5 V13.5 H0.5 Z" stroke="#5f5f5f" stroke-width="0.9" fill="#fff"/><path d="M10.5 1 V4 L9.5 3" stroke="#777" stroke-width="0.6" fill="none"/><path d="M8.5 7.5 L11 6 L13.5 7.5 V10.5 L11 12 L8.5 10.5 Z" stroke="#2f7fd0" stroke-width="1" fill="#fff"/><circle cx="11" cy="9" r="1" fill="#2f7fd0"/></svg>
<div class="t" style="left:702.5px;top:151.4px;font-size:6px;color:#222222;font-weight:400;transform:translateX(-50%);letter-spacing:-0.2px;">엑셀 옵</div>
<div class="t" style="left:702.5px;top:158.5px;font-size:6px;color:#222222;font-weight:400;transform:translateX(-50%);letter-spacing:-0.2px;">션 <span style="color:#808080;font-size:5px;position:relative;top:-0.5px">▾</span></div>
<svg class="a" style="left:717px;top:135.5px" width="14" height="15" viewBox="0 0 14 15"><path d="M0.5 2.5 C0.5 0 10 0 10 2.5 V12 C10 14.5 0.5 14.5 0.5 12 Z" stroke="#5f5f5f" stroke-width="0.9" fill="#fff"/><path d="M0.5 2.5 C0.5 5 10 5 10 2.5" stroke="#5f5f5f" stroke-width="0.8" fill="none"/><path d="M8 7 V14 M12 7 V14 M7 8.5 H9 M11 8.5 H13" stroke="#2f7fd0" stroke-width="1.4"/></svg>
<div class="t" style="left:723px;top:151.4px;font-size:6px;color:#222222;font-weight:400;transform:translateX(-50%);letter-spacing:-0.2px;">이벨를</div>
<div class="t" style="left:723px;top:158.5px;font-size:6px;color:#222222;font-weight:400;transform:translateX(-50%);letter-spacing:-0.2px;">옵션 <span style="color:#808080;font-size:5px;position:relative;top:-0.5px">▾</span></div>
<svg class="a" style="left:1186px;top:170px" width="8" height="5" viewBox="0 0 8 5"><path d="M1 4 L4 1 L7 4" stroke="#555" stroke-width="0.9" fill="none"/></svg>
<div class="a" style="left:4px;top:178px;width:1192px;height:17px;background:#f4f1f0;"></div>
<div class="a" style="left:34.5px;top:181px;width:1px;height:11px;background:#d9d7d5;"></div>
<div class="a" style="left:91px;top:181px;width:1px;height:11px;background:#d9d7d5;"></div>
<div class="a" style="left:122.4px;top:181px;width:1px;height:11px;background:#d9d7d5;"></div>
<div class="a" style="left:139.4px;top:181px;width:1px;height:11px;background:#d9d7d5;"></div>
<div class="a" style="left:211.2px;top:181px;width:1px;height:11px;background:#d9d7d5;"></div>
<div class="a" style="left:282.5px;top:181px;width:1px;height:11px;background:#d9d7d5;"></div>
<div class="a" style="left:311.8px;top:181px;width:1px;height:11px;background:#d9d7d5;"></div>
<div class="a" style="left:410.2px;top:181px;width:1px;height:11px;background:#d9d7d5;"></div>
<div class="a" style="left:521.6px;top:181px;width:1px;height:11px;background:#d9d7d5;"></div>
<div class="a" style="left:552.3px;top:181px;width:1px;height:11px;background:#d9d7d5;"></div>
<div class="a" style="left:182.5px;top:179.5px;width:12.5px;height:14.5px;background:#d6d6d6;border:1px solid #a8a8a8;box-sizing:border-box"></div>
<div class="a" style="left:461.5px;top:179.5px;width:13.5px;height:14.5px;background:#d6d6d6;border:1px solid #a8a8a8;box-sizing:border-box"></div>
<svg class="a" style="left:8px;top:183px" width="9" height="8" viewBox="0 0 9 8"><path d="M0.5 6 L3 3.5 L5 5.5 L2.5 8 Z" fill="#e8832a"/><path d="M3.5 3.5 L6.5 0.5 L8.5 2.5 L5.5 5.5" stroke="#666" stroke-width="1" fill="#888"/></svg>
<svg class="a" style="left:21px;top:182.5px" width="9" height="9" viewBox="0 0 9 9"><rect x="0.5" y="0.5" width="5" height="6" stroke="#6a6a6a" stroke-width="0.8" fill="#fff"/><rect x="3" y="2.5" width="5.5" height="6" stroke="#6a6a6a" stroke-width="0.8" fill="#fff"/><path d="M3 4 L5 2.5 M3 4 L5 5.5 M3 4 H7" stroke="#2f7fd0" stroke-width="0.8"/></svg>
<div class="t" style="left:39.4px;top:182.6px;font-size:8px;color:#666;font-weight:400;">V</div>
<div class="t" style="left:53.8px;top:182.6px;font-size:8px;color:#666;font-weight:400;">F</div>
<div class="t" style="left:67.5px;top:182.8px;font-size:8px;color:#111;font-weight:700;">S</div>
<div class="t" style="left:81.4px;top:182.6px;font-size:8px;color:#666;font-weight:400;">L</div>
<svg class="a" style="left:96px;top:183px" width="10" height="9" viewBox="0 0 10 9"><path d="M0.6 0.6 H9.4 L6 4.5 V8.5 L4 7.5 V4.5 Z" stroke="#555" stroke-width="0.9" fill="none"/></svg>
<svg class="a" style="left:109.5px;top:183px" width="10" height="9" viewBox="0 0 10 9"><path d="M0.6 0.6 H9.4 L6 4.5 V8.5 L4 7.5 V4.5 Z" stroke="#bbb" stroke-width="0.9" fill="none"/><path d="M6 5 L9 8 M9 5 L6 8" stroke="#ccc" stroke-width="0.7"/></svg>
<svg class="a" style="left:127.5px;top:183px" width="7" height="9" viewBox="0 0 7 9"><path d="M6.5 1 H0.8 L4 4.5 L0.8 8 H6.5" stroke="#555" stroke-width="0.9" fill="none"/></svg>
<svg class="a" style="left:145px;top:183px" width="7" height="8" viewBox="0 0 7 8"><path d="M0 0.5 H7 M0 2.8 H5 M0 5.1 H7 M0 7.4 H5" stroke="#666" stroke-width="0.9"/></svg>
<svg class="a" style="left:158.3px;top:183px" width="7" height="8" viewBox="0 0 7 8"><path d="M0 0.5 H7 M1 2.8 H6 M0 5.1 H7 M1 7.4 H6" stroke="#666" stroke-width="0.9"/></svg>
<svg class="a" style="left:171.8px;top:183px" width="7" height="8" viewBox="0 0 7 8"><path d="M0 0.5 H7 M2 2.8 H7 M0 5.1 H7 M2 7.4 H7" stroke="#666" stroke-width="0.9"/></svg>
<svg class="a" style="left:185px;top:183px" width="8" height="8" viewBox="0 0 8 8"><path d="M0 0.5 H8 M0 7.5 H8" stroke="#444" stroke-width="0.9"/><rect x="1" y="2.5" width="6" height="3" stroke="#444" stroke-width="0.8" fill="none"/></svg>
<svg class="a" style="left:199.5px;top:182.5px" width="9" height="9" viewBox="0 0 9 9"><path d="M0 1.5 H4 M0 4 H3" stroke="#777" stroke-width="0.8"/><path d="M5 1 H7.5 V6 H4" stroke="#2f7fd0" stroke-width="0.9" fill="none"/><path d="M5 4.5 L3.5 6 L5 7.5" stroke="#2f7fd0" stroke-width="0.9" fill="none"/></svg>
<svg class="a" style="left:215.2px;top:183px" width="8" height="8" viewBox="0 0 8 8"><rect x="0.5" y="0.5" width="7" height="7" stroke="#333" stroke-width="0.8" fill="#fff"/><path d="M0.5 7.5 L7.5 2 V7.5 Z" fill="#111"/></svg>
<svg class="a" style="left:229.5px;top:183px" width="8" height="8" viewBox="0 0 8 8"><path d="M2 0.5 H0.5 V7.5 H2 M6 0.5 H7.5 V7.5 H6" stroke="#666" stroke-width="0.8" fill="none"/><path d="M3 4 H4.5" stroke="#999" stroke-width="0.8"/></svg>
<svg class="a" style="left:243px;top:182.5px" width="7" height="9" viewBox="0 0 7 9"><rect x="0.5" y="0.5" width="6" height="8" stroke="#555" stroke-width="0.8" fill="#fff"/><rect x="0.5" y="0.5" width="6" height="2" fill="#2f7fd0"/><path d="M0.5 4.5 H6.5 M0.5 6.5 H6.5 M2.5 2.5 V8.5 M4.5 2.5 V8.5" stroke="#777" stroke-width="0.5"/></svg>
<svg class="a" style="left:256.4px;top:183px" width="8" height="8" viewBox="0 0 8 8"><path d="M1.5 0 V8 M6.5 0 V8 M0 1.5 H8 M0 6.5 H8" stroke="#444" stroke-width="0.9"/></svg>
<svg class="a" style="left:270px;top:183px" width="8" height="8" viewBox="0 0 8 8"><rect x="0.5" y="0.5" width="7" height="7" stroke="#555" stroke-width="0.8" fill="#fff"/><rect x="0.5" y="0.5" width="7" height="3" fill="#333"/></svg>
<div class="t" style="left:286.5px;top:183px;font-size:6px;color:#444;font-weight:400;">가</div>
<svg class="a" style="left:292px;top:182.5px" width="3" height="3" viewBox="0 0 3 3"><path d="M0.3 2.5 L1.5 0.8 L2.7 2.5" stroke="#2f7fd0" stroke-width="0.7" fill="none"/></svg>
<div class="t" style="left:300.7px;top:183px;font-size:6px;color:#444;font-weight:400;">가</div>
<svg class="a" style="left:306px;top:182.5px" width="3" height="3" viewBox="0 0 3 3"><path d="M0.3 0.8 L1.5 2.5 L2.7 0.8" stroke="#2f7fd0" stroke-width="0.7" fill="none"/></svg>
<svg class="a" style="left:317.3px;top:182.5px" width="9" height="9" viewBox="0 0 9 9"><path d="M1.5 4 L4.5 1 L7.5 4 L4.5 6.5 Z" stroke="#555" stroke-width="0.8" fill="#fff"/><rect x="0" y="7" width="9" height="2" fill="#f5e500"/></svg>
<svg class="a" style="left:327.5px;top:186px" width="4" height="3" viewBox="0 0 4 3"><path d="M0 0.5 H3.5 L1.75 2.5 Z" fill="#777"/></svg>
<div class="t" style="left:336px;top:182px;font-size:6px;color:#444;font-weight:400;">가</div>
<div class="a" style="left:335.8px;top:190px;width:7.6px;height:1.5px;background:#e02020;"></div>
<svg class="a" style="left:346.0px;top:186px" width="4" height="3" viewBox="0 0 4 3"><path d="M0 0.5 H3.5 L1.75 2.5 Z" fill="#777"/></svg>
<svg class="a" style="left:351.7px;top:183px" width="8" height="8" viewBox="0 0 8 8"><rect x="0.5" y="0.5" width="7" height="7" stroke="#2f7fd0" stroke-width="0.7" fill="#dde8f5" stroke-dasharray="1 0.6"/><path d="M0.5 7.5 L7.5 0.5" stroke="#555" stroke-width="0.8"/></svg>
<svg class="a" style="left:362.5px;top:186px" width="4" height="3" viewBox="0 0 4 3"><path d="M0 0.5 H3.5 L1.75 2.5 Z" fill="#777"/></svg>
<svg class="a" style="left:372.5px;top:184px" width="5" height="7" viewBox="0 0 5 7"><circle cx="2.5" cy="2.2" r="1.7" fill="#222"/><path d="M3.8 2.5 C4 4.5 3 6 1.5 6.5" stroke="#222" stroke-width="1" fill="none"/></svg>
<svg class="a" style="left:385px;top:183px" width="8" height="8" viewBox="0 0 8 8"><path d="M0 2 H3 M1 0.5 L0 2 L1 3.5" stroke="#2f7fd0" stroke-width="0.7" fill="none"/><path d="M4.5 0.5 V3 M6.5 0.5 V3 M4 5 V7.5 M6.5 5 V7.5" stroke="#888" stroke-width="0.7"/></svg>
<svg class="a" style="left:398.4px;top:183px" width="8" height="8" viewBox="0 0 8 8"><path d="M0 6 H3.5 M2.5 4.5 L3.5 6 L2.5 7.5" stroke="#2f7fd0" stroke-width="0.7" fill="none"/><path d="M4.5 0.5 V3 M6.5 0.5 V3 M4.5 5 V7.5 M6.5 5 V7.5" stroke="#888" stroke-width="0.7"/></svg>
<svg class="a" style="left:415px;top:183px" width="8" height="8" viewBox="0 0 8 8"><rect x="0.5" y="0.5" width="7" height="5" stroke="#666" stroke-width="0.8" fill="#fff"/><path d="M4 0.5 V5.5" stroke="#999" stroke-width="0.6"/><path d="M0 7.5 H8" stroke="#444" stroke-width="1"/></svg>
<svg class="a" style="left:425.5px;top:186px" width="4" height="3" viewBox="0 0 4 3"><path d="M0 0.5 H3.5 L1.75 2.5 Z" fill="#777"/></svg>
<svg class="a" style="left:432.7px;top:183px" width="8" height="8" viewBox="0 0 8 8"><rect x="0.5" y="0.5" width="7" height="7" stroke="#2f7fd0" stroke-width="0.9" fill="#e6f0fa"/><path d="M2 4 H6 M4 2 V6" stroke="#555" stroke-width="0.6"/></svg>
<svg class="a" style="left:446.7px;top:183px" width="8" height="8" viewBox="0 0 8 8"><rect x="0.5" y="0.5" width="7" height="7" stroke="#2f7fd0" stroke-width="0.9" fill="#e6f0fa"/><path d="M0.5 4 H7.5" stroke="#555" stroke-width="0.7"/></svg>
<svg class="a" style="left:463.5px;top:183px" width="9" height="8" viewBox="0 0 9 8"><rect x="0.5" y="0.5" width="8" height="7" stroke="#444" stroke-width="0.8" fill="#fff"/><path d="M3.2 0.5 V7.5 M5.8 0.5 V7.5" stroke="#2f7fd0" stroke-width="0.9"/></svg>
<svg class="a" style="left:477.5px;top:183px" width="8" height="8" viewBox="0 0 8 8"><rect x="0" y="2" width="3" height="6" fill="#2f7fd0"/><rect x="4.5" y="2" width="3.5" height="6" fill="#2f7fd0"/><path d="M1.5 0 V2 M6 0 V2" stroke="#2f7fd0" stroke-width="0.8"/><path d="M0 5 H8" stroke="#fff" stroke-width="0.5"/></svg>
<svg class="a" style="left:490.2px;top:183px" width="9" height="9" viewBox="0 0 9 9"><circle cx="5.5" cy="3.3" r="2.6" stroke="#444" stroke-width="0.8" fill="none"/><path d="M3.6 5.2 L0.6 8.2" stroke="#444" stroke-width="1"/></svg>
<svg class="a" style="left:500.5px;top:186px" width="4" height="3" viewBox="0 0 4 3"><path d="M0 0.5 H3.5 L1.75 2.5 Z" fill="#777"/></svg>
<svg class="a" style="left:508.7px;top:183px" width="8" height="8" viewBox="0 0 8 8"><rect x="0" y="0" width="8" height="8" fill="#2f7fd0"/><path d="M2.7 0 V8 M5.3 0 V8 M0 2.7 H8 M0 5.3 H8" stroke="#fff" stroke-width="0.5"/></svg>
<svg class="a" style="left:526px;top:183px" width="8" height="8" viewBox="0 0 8 8"><path d="M0.5 2.5 L3 1.5 V6.5 L0.5 5.5 Z" stroke="#888" stroke-width="0.6" fill="#ddd"/><rect x="4" y="0.5" width="3.5" height="7" stroke="#777" stroke-width="0.7" fill="#fff"/><path d="M5.75 0.5 V7.5" stroke="#777" stroke-width="0.5"/></svg>
<svg class="a" style="left:540px;top:183px" width="8" height="8" viewBox="0 0 8 8"><path d="M0.5 2.5 L3 1.5 V6.5 L0.5 5.5 Z" fill="#e03030"/><rect x="4" y="0.5" width="3.5" height="7" stroke="#777" stroke-width="0.7" fill="#fff"/><path d="M5.75 0.5 V7.5" stroke="#777" stroke-width="0.5"/></svg>
<svg class="a" style="left:556px;top:182.5px" width="8" height="9" viewBox="0 0 8 9"><rect x="0.5" y="0.5" width="7" height="8" stroke="#555" stroke-width="0.8" fill="#888"/><rect x="1.5" y="1.5" width="5" height="1.5" fill="#cde"/><path d="M1.5 4.5 H6.5 M1.5 6.5 H6.5 M3 3.5 V8 M5 3.5 V8" stroke="#ddd" stroke-width="0.5"/></svg>
<svg class="a" style="left:565.8px;top:186px" width="4" height="3" viewBox="0 0 4 3"><path d="M0 0.5 H3.5 L1.75 2.5 Z" fill="#777"/></svg>
<svg class="a" style="left:575px;top:182.5px" width="7" height="9" viewBox="0 0 7 9"><path d="M0.8 0.8 L6 5.5 H3.5 L2 8 Z" stroke="#444" stroke-width="0.8" fill="#fff"/></svg>
<svg class="a" style="left:587.5px;top:182.5px" width="9" height="9" viewBox="0 0 9 9"><path d="M0.8 8 V1 L8 8 V1" stroke="#aaa" stroke-width="0.9" fill="none"/><path d="M0.5 1 H2 M7 8 H8.5" stroke="#aaa" stroke-width="0.6"/></svg>
<svg class="a" style="left:602px;top:182.5px" width="8" height="9" viewBox="0 0 8 9"><rect x="0.5" y="0.5" width="6" height="8" stroke="#555" stroke-width="0.8" fill="#fff"/><circle cx="5.5" cy="6.5" r="2.3" fill="#2f7fd0"/></svg>
<svg class="a" style="left:616px;top:183px" width="7" height="8" viewBox="0 0 7 8"><path d="M0.5 1.5 C1.5 0.5 2.5 0.5 3 1.5 M4 1.5 C4.5 0.5 5.5 0.5 6.5 1.5" stroke="#888" stroke-width="0.6" fill="none"/><path d="M1 4.5 L2.8 6.8 L6.3 3" stroke="#3aa757" stroke-width="1" fill="none"/></svg>
<svg class="a" style="left:628.7px;top:182.5px" width="8" height="8" viewBox="0 0 8 8"><circle cx="4" cy="4" r="3.8" fill="#2f7fd0"/><circle cx="4" cy="4" r="1.6" stroke="#cfe3f7" stroke-width="0.6" fill="none"/></svg>
<svg class="a" style="left:644.5px;top:184.5px" width="4" height="5" viewBox="0 0 4 5"><path d="M0 0.5 H3.5" stroke="#777" stroke-width="0.6"/><path d="M0 2 H3.5 L1.75 4 Z" fill="#777"/></svg>
<div class="a" style="left:4px;top:195px;width:1192px;height:20px;background:#e8e8e8;"></div>
<div class="a" style="left:7px;top:199px;width:66px;height:13px;background:#ffffff;"></div>
<div class="t" style="left:10px;top:201.8px;font-size:7px;color:#444;font-weight:400;">C11</div>
<div class="t" style="left:67px;top:201px;font-size:6px;color:#555;font-weight:400;">▾</div>
<div class="t" style="left:78px;top:201px;font-size:7px;color:#999;font-weight:400;">⋮</div>
<div class="a" style="left:88px;top:199px;width:49px;height:13px;background:#ffffff;"></div>
<div class="t" style="left:93px;top:202px;font-size:7px;color:#aaa;font-weight:400;">✕</div>
<div class="t" style="left:110px;top:202px;font-size:7px;color:#aaa;font-weight:400;">✓</div>
<div class="t" style="left:126px;top:201px;font-size:7px;color:#555;font-weight:400;"><i>f</i>x</div>
<div class="a" style="left:140px;top:199px;width:1053px;height:13px;background:#ffffff;"></div>
<div class="t" style="left:1185px;top:201px;font-size:7px;color:#555;font-weight:400;">⌄</div>
<div class="a" style="left:4px;top:215px;width:1192px;height:516px;background:#ffffff;"></div>
<div class="a" style="left:4px;top:195px;width:1px;height:536px;background:#9a9a9a;"></div>
<div class="a" style="left:5px;top:195px;width:1px;height:536px;background:#ffffff;"></div>
<div class="a" style="left:6px;top:215px;width:1181px;height:27px;background:#e6e6e6;"></div>
<div class="a" style="left:273px;top:217px;width:553px;height:25px;background:#d2d2d2;"></div>
<div class="a" style="left:6px;top:241px;width:1181px;height:1px;background:#bdbdbd;"></div>
<div class="a" style="left:273px;top:241px;width:553px;height:2px;background:#217346;"></div>
<svg class="a" style="left:17px;top:219px" width="21" height="21" viewBox="0 0 21 21"><path d="M21 0 V21 H0 Z" fill="#b4b4b4"/></svg>
<div class="a" style="left:39px;top:217px;width:1px;height:24px;background:#c8c8c8;"></div>
<div class="a" style="left:64px;top:217px;width:1px;height:24px;background:#c8c8c8;"></div>
<div class="a" style="left:273px;top:217px;width:1px;height:24px;background:#c8c8c8;"></div>
<div class="a" style="left:825.5px;top:217px;width:1px;height:24px;background:#c8c8c8;"></div>
<div class="a" style="left:908px;top:217px;width:1px;height:24px;background:#c8c8c8;"></div>
<div class="a" style="left:991px;top:217px;width:1px;height:24px;background:#c8c8c8;"></div>
<div class="a" style="left:1074px;top:217px;width:1px;height:24px;background:#c8c8c8;"></div>
<div class="a" style="left:1157px;top:217px;width:1px;height:24px;background:#c8c8c8;"></div>
<div class="t" style="left:51.5px;top:219.5px;font-size:16.5px;color:#222;font-weight:400;transform:translateX(-50%)">A</div>
<div class="t" style="left:168.5px;top:219.5px;font-size:16.5px;color:#222;font-weight:400;transform:translateX(-50%)">B</div>
<div class="t" style="left:549.25px;top:219.5px;font-size:16.5px;color:#217346;font-weight:400;transform:translateX(-50%)">C</div>
<div class="t" style="left:866.75px;top:219.5px;font-size:16.5px;color:#222;font-weight:400;transform:translateX(-50%)">D</div>
<div class="t" style="left:949.5px;top:219.5px;font-size:16.5px;color:#222;font-weight:400;transform:translateX(-50%)">E</div>
<div class="t" style="left:1032.5px;top:219.5px;font-size:16.5px;color:#222;font-weight:400;transform:translateX(-50%)">F</div>
<div class="t" style="left:1115.5px;top:219.5px;font-size:16.5px;color:#222;font-weight:400;transform:translateX(-50%)">G</div>
<div class="a" style="left:6px;top:242px;width:33.5px;height:489px;background:#e6e6e6;"></div>
<div class="a" style="left:6px;top:471px;width:33px;height:22px;background:#d2d2d2;"></div>
<div class="a" style="left:38.5px;top:471px;width:2px;height:22px;background:#217346;"></div>
<div class="a" style="left:39px;top:242px;width:1px;height:489px;background:#c6c6c6;"></div>
<div class="a" style="left:6px;top:282px;width:33px;height:1px;background:#c8c8c8;"></div>
<div class="t" style="left:22.5px;top:262.0px;font-size:16px;color:#222;font-weight:400;transform:translateX(-50%)">1</div>
<div class="a" style="left:6px;top:303px;width:33px;height:1px;background:#c8c8c8;"></div>
<div class="t" style="left:22.5px;top:284.45px;font-size:16px;color:#222;font-weight:400;transform:translateX(-50%)">2</div>
<div class="a" style="left:6px;top:324px;width:33px;height:1px;background:#c8c8c8;"></div>
<div class="t" style="left:22.5px;top:305.4px;font-size:16px;color:#222;font-weight:400;transform:translateX(-50%)">3</div>
<div class="a" style="left:6px;top:345px;width:33px;height:1px;background:#c8c8c8;"></div>
<div class="t" style="left:22.5px;top:326.35px;font-size:16px;color:#222;font-weight:400;transform:translateX(-50%)">4</div>
<div class="a" style="left:6px;top:366px;width:33px;height:1px;background:#c8c8c8;"></div>
<div class="t" style="left:22.5px;top:347.3px;font-size:16px;color:#222;font-weight:400;transform:translateX(-50%)">5</div>
<div class="a" style="left:6px;top:387px;width:33px;height:1px;background:#c8c8c8;"></div>
<div class="t" style="left:22.5px;top:368.25px;font-size:16px;color:#222;font-weight:400;transform:translateX(-50%)">6</div>
<div class="a" style="left:6px;top:408px;width:33px;height:1px;background:#c8c8c8;"></div>
<div class="t" style="left:22.5px;top:389.2px;font-size:16px;color:#222;font-weight:400;transform:translateX(-50%)">7</div>
<div class="a" style="left:6px;top:429px;width:33px;height:1px;background:#c8c8c8;"></div>
<div class="t" style="left:22.5px;top:410.15px;font-size:16px;color:#222;font-weight:400;transform:translateX(-50%)">8</div>
<div class="a" style="left:6px;top:450px;width:33px;height:1px;background:#c8c8c8;"></div>
<div class="t" style="left:22.5px;top:431.1px;font-size:16px;color:#222;font-weight:400;transform:translateX(-50%)">9</div>
<div class="a" style="left:6px;top:471px;width:33px;height:1px;background:#c8c8c8;"></div>
<div class="t" style="left:22.5px;top:452.04999999999995px;font-size:16px;color:#222;font-weight:400;transform:translateX(-50%)">10</div>
<div class="a" style="left:6px;top:491px;width:33px;height:1px;background:#c8c8c8;"></div>
<div class="t" style="left:22.5px;top:473.0px;font-size:16px;color:#217346;font-weight:400;transform:translateX(-50%)">11</div>
<div class="a" style="left:6px;top:512px;width:33px;height:1px;background:#c8c8c8;"></div>
<div class="t" style="left:22.5px;top:493.95000000000005px;font-size:16px;color:#222;font-weight:400;transform:translateX(-50%)">12</div>
<div class="a" style="left:6px;top:533px;width:33px;height:1px;background:#c8c8c8;"></div>
<div class="t" style="left:22.5px;top:514.9px;font-size:16px;color:#222;font-weight:400;transform:translateX(-50%)">13</div>
<div class="a" style="left:6px;top:554px;width:33px;height:1px;background:#c8c8c8;"></div>
<div class="t" style="left:22.5px;top:535.8499999999999px;font-size:16px;color:#222;font-weight:400;transform:translateX(-50%)">14</div>
<div class="a" style="left:6px;top:575px;width:33px;height:1px;background:#c8c8c8;"></div>
<div class="t" style="left:22.5px;top:556.8px;font-size:16px;color:#222;font-weight:400;transform:translateX(-50%)">15</div>
<div class="a" style="left:6px;top:596px;width:33px;height:1px;background:#c8c8c8;"></div>
<div class="t" style="left:22.5px;top:577.75px;font-size:16px;color:#222;font-weight:400;transform:translateX(-50%)">16</div>
<div class="a" style="left:6px;top:617px;width:33px;height:1px;background:#c8c8c8;"></div>
<div class="t" style="left:22.5px;top:598.7px;font-size:16px;color:#222;font-weight:400;transform:translateX(-50%)">17</div>
<div class="a" style="left:6px;top:638px;width:33px;height:1px;background:#c8c8c8;"></div>
<div class="t" style="left:22.5px;top:619.65px;font-size:16px;color:#222;font-weight:400;transform:translateX(-50%)">18</div>
<div class="a" style="left:6px;top:659px;width:33px;height:1px;background:#c8c8c8;"></div>
<div class="t" style="left:22.5px;top:640.5999999999999px;font-size:16px;color:#222;font-weight:400;transform:translateX(-50%)">19</div>
<div class="a" style="left:6px;top:680px;width:33px;height:1px;background:#c8c8c8;"></div>
<div class="t" style="left:22.5px;top:661.55px;font-size:16px;color:#222;font-weight:400;transform:translateX(-50%)">20</div>
<div class="a" style="left:6px;top:701px;width:33px;height:1px;background:#c8c8c8;"></div>
<div class="t" style="left:22.5px;top:682.5px;font-size:16px;color:#222;font-weight:400;transform:translateX(-50%)">21</div>
<div class="a" style="left:6px;top:722px;width:33px;height:1px;background:#c8c8c8;"></div>
<div class="t" style="left:22.5px;top:703.45px;font-size:16px;color:#222;font-weight:400;transform:translateX(-50%)">22</div>
<div class="a" style="left:6px;top:743px;width:33px;height:1px;background:#c8c8c8;"></div>
<div class="t" style="left:22.5px;top:724.4px;font-size:16px;color:#222;font-weight:400;transform:translateX(-50%)">23</div>
<div class="a" style="left:64px;top:303.95px;width:209px;height:21px;background:#f2f2f2;"></div>
<div class="a" style="left:64px;top:408.7px;width:209px;height:21px;background:#f2f2f2;"></div>
<div class="a" style="left:64px;top:576.3px;width:209px;height:21px;background:#f2f2f2;"></div>
<div class="a" style="left:39px;top:282px;width:1147px;height:1px;background:#e1e1e1;"></div>
<div class="a" style="left:39px;top:303px;width:1147px;height:1px;background:#e1e1e1;"></div>
<div class="a" style="left:39px;top:324px;width:1147px;height:1px;background:#e1e1e1;"></div>
<div class="a" style="left:39px;top:345px;width:1147px;height:1px;background:#e1e1e1;"></div>
<div class="a" style="left:39px;top:366px;width:1147px;height:1px;background:#e1e1e1;"></div>
<div class="a" style="left:39px;top:387px;width:1147px;height:1px;background:#e1e1e1;"></div>
<div class="a" style="left:39px;top:408px;width:1147px;height:1px;background:#e1e1e1;"></div>
<div class="a" style="left:39px;top:429px;width:1147px;height:1px;background:#e1e1e1;"></div>
<div class="a" style="left:39px;top:450px;width:1147px;height:1px;background:#e1e1e1;"></div>
<div class="a" style="left:39px;top:471px;width:1147px;height:1px;background:#e1e1e1;"></div>
<div class="a" style="left:39px;top:491px;width:1147px;height:1px;background:#e1e1e1;"></div>
<div class="a" style="left:39px;top:512px;width:1147px;height:1px;background:#e1e1e1;"></div>
<div class="a" style="left:39px;top:533px;width:1147px;height:1px;background:#e1e1e1;"></div>
<div class="a" style="left:39px;top:554px;width:1147px;height:1px;background:#e1e1e1;"></div>
<div class="a" style="left:39px;top:575px;width:1147px;height:1px;background:#e1e1e1;"></div>
<div class="a" style="left:39px;top:596px;width:1147px;height:1px;background:#e1e1e1;"></div>
<div class="a" style="left:39px;top:617px;width:1147px;height:1px;background:#e1e1e1;"></div>
<div class="a" style="left:39px;top:638px;width:1147px;height:1px;background:#e1e1e1;"></div>
<div class="a" style="left:39px;top:659px;width:1147px;height:1px;background:#e1e1e1;"></div>
<div class="a" style="left:39px;top:680px;width:1147px;height:1px;background:#e1e1e1;"></div>
<div class="a" style="left:39px;top:701px;width:1147px;height:1px;background:#e1e1e1;"></div>
<div class="a" style="left:39px;top:722px;width:1147px;height:1px;background:#e1e1e1;"></div>
<div class="a" style="left:64px;top:242px;width:1px;height:40px;background:#e1e1e1;"></div>
<div class="a" style="left:64px;top:283px;width:1px;height:20px;background:#e1e1e1;"></div>
<div class="a" style="left:64px;top:304px;width:1px;height:20px;background:#e1e1e1;"></div>
<div class="a" style="left:64px;top:325px;width:1px;height:20px;background:#e1e1e1;"></div>
<div class="a" style="left:64px;top:346px;width:1px;height:20px;background:#e1e1e1;"></div>
<div class="a" style="left:64px;top:367px;width:1px;height:20px;background:#e1e1e1;"></div>
<div class="a" style="left:64px;top:388px;width:1px;height:20px;background:#e1e1e1;"></div>
<div class="a" style="left:64px;top:409px;width:1px;height:20px;background:#e1e1e1;"></div>
<div class="a" style="left:64px;top:430px;width:1px;height:20px;background:#e1e1e1;"></div>
<div class="a" style="left:64px;top:451px;width:1px;height:20px;background:#e1e1e1;"></div>
<div class="a" style="left:64px;top:472px;width:1px;height:19px;background:#e1e1e1;"></div>
<div class="a" style="left:64px;top:492px;width:1px;height:20px;background:#e1e1e1;"></div>
<div class="a" style="left:64px;top:513px;width:1px;height:20px;background:#e1e1e1;"></div>
<div class="a" style="left:64px;top:534px;width:1px;height:20px;background:#e1e1e1;"></div>
<div class="a" style="left:64px;top:555px;width:1px;height:20px;background:#e1e1e1;"></div>
<div class="a" style="left:64px;top:576px;width:1px;height:20px;background:#e1e1e1;"></div>
<div class="a" style="left:64px;top:597px;width:1px;height:20px;background:#e1e1e1;"></div>
<div class="a" style="left:64px;top:618px;width:1px;height:20px;background:#e1e1e1;"></div>
<div class="a" style="left:64px;top:639px;width:1px;height:20px;background:#e1e1e1;"></div>
<div class="a" style="left:64px;top:660px;width:1px;height:20px;background:#e1e1e1;"></div>
<div class="a" style="left:64px;top:681px;width:1px;height:20px;background:#e1e1e1;"></div>
<div class="a" style="left:64px;top:702px;width:1px;height:20px;background:#e1e1e1;"></div>
<div class="a" style="left:64px;top:723px;width:1px;height:20px;background:#e1e1e1;"></div>
<div class="a" style="left:273px;top:242px;width:1px;height:40px;background:#e1e1e1;"></div>
<div class="a" style="left:273px;top:283px;width:1px;height:20px;background:#e1e1e1;"></div>
<div class="a" style="left:273px;top:304px;width:1px;height:20px;background:#e1e1e1;"></div>
<div class="a" style="left:273px;top:325px;width:1px;height:20px;background:#e1e1e1;"></div>
<div class="a" style="left:273px;top:388px;width:1px;height:20px;background:#e1e1e1;"></div>
<div class="a" style="left:273px;top:409px;width:1px;height:20px;background:#e1e1e1;"></div>
<div class="a" style="left:273px;top:472px;width:1px;height:19px;background:#e1e1e1;"></div>
<div class="a" style="left:273px;top:492px;width:1px;height:20px;background:#e1e1e1;"></div>
<div class="a" style="left:273px;top:513px;width:1px;height:20px;background:#e1e1e1;"></div>
<div class="a" style="left:273px;top:534px;width:1px;height:20px;background:#e1e1e1;"></div>
<div class="a" style="left:273px;top:555px;width:1px;height:20px;background:#e1e1e1;"></div>
<div class="a" style="left:273px;top:576px;width:1px;height:20px;background:#e1e1e1;"></div>
<div class="a" style="left:273px;top:639px;width:1px;height:20px;background:#e1e1e1;"></div>
<div class="a" style="left:273px;top:660px;width:1px;height:20px;background:#e1e1e1;"></div>
<div class="a" style="left:273px;top:681px;width:1px;height:20px;background:#e1e1e1;"></div>
<div class="a" style="left:273px;top:702px;width:1px;height:20px;background:#e1e1e1;"></div>
<div class="a" style="left:273px;top:723px;width:1px;height:20px;background:#e1e1e1;"></div>
<div class="a" style="left:825.5px;top:242px;width:1px;height:40px;background:#e1e1e1;"></div>
<div class="a" style="left:825.5px;top:283px;width:1px;height:20px;background:#e1e1e1;"></div>
<div class="a" style="left:825.5px;top:304px;width:1px;height:20px;background:#e1e1e1;"></div>
<div class="a" style="left:825.5px;top:325px;width:1px;height:20px;background:#e1e1e1;"></div>
<div class="a" style="left:825.5px;top:346px;width:1px;height:20px;background:#e1e1e1;"></div>
<div class="a" style="left:825.5px;top:367px;width:1px;height:20px;background:#e1e1e1;"></div>
<div class="a" style="left:825.5px;top:388px;width:1px;height:20px;background:#e1e1e1;"></div>
<div class="a" style="left:825.5px;top:409px;width:1px;height:20px;background:#e1e1e1;"></div>
<div class="a" style="left:825.5px;top:430px;width:1px;height:20px;background:#e1e1e1;"></div>
<div class="a" style="left:825.5px;top:451px;width:1px;height:20px;background:#e1e1e1;"></div>
<div class="a" style="left:825.5px;top:472px;width:1px;height:19px;background:#e1e1e1;"></div>
<div class="a" style="left:825.5px;top:492px;width:1px;height:20px;background:#e1e1e1;"></div>
<div class="a" style="left:825.5px;top:513px;width:1px;height:20px;background:#e1e1e1;"></div>
<div class="a" style="left:825.5px;top:534px;width:1px;height:20px;background:#e1e1e1;"></div>
<div class="a" style="left:825.5px;top:555px;width:1px;height:20px;background:#e1e1e1;"></div>
<div class="a" style="left:825.5px;top:576px;width:1px;height:20px;background:#e1e1e1;"></div>
<div class="a" style="left:825.5px;top:597px;width:1px;height:20px;background:#e1e1e1;"></div>
<div class="a" style="left:825.5px;top:618px;width:1px;height:20px;background:#e1e1e1;"></div>
<div class="a" style="left:825.5px;top:639px;width:1px;height:20px;background:#e1e1e1;"></div>
<div class="a" style="left:825.5px;top:660px;width:1px;height:20px;background:#e1e1e1;"></div>
<div class="a" style="left:825.5px;top:681px;width:1px;height:20px;background:#e1e1e1;"></div>
<div class="a" style="left:825.5px;top:702px;width:1px;height:20px;background:#e1e1e1;"></div>
<div class="a" style="left:825.5px;top:723px;width:1px;height:20px;background:#e1e1e1;"></div>
<div class="a" style="left:908px;top:242px;width:1px;height:40px;background:#e1e1e1;"></div>
<div class="a" style="left:908px;top:283px;width:1px;height:20px;background:#e1e1e1;"></div>
<div class="a" style="left:908px;top:304px;width:1px;height:20px;background:#e1e1e1;"></div>
<div class="a" style="left:908px;top:325px;width:1px;height:20px;background:#e1e1e1;"></div>
<div class="a" style="left:908px;top:346px;width:1px;height:20px;background:#e1e1e1;"></div>
<div class="a" style="left:908px;top:367px;width:1px;height:20px;background:#e1e1e1;"></div>
<div class="a" style="left:908px;top:388px;width:1px;height:20px;background:#e1e1e1;"></div>
<div class="a" style="left:908px;top:409px;width:1px;height:20px;background:#e1e1e1;"></div>
<div class="a" style="left:908px;top:430px;width:1px;height:20px;background:#e1e1e1;"></div>
<div class="a" style="left:908px;top:451px;width:1px;height:20px;background:#e1e1e1;"></div>
<div class="a" style="left:908px;top:472px;width:1px;height:19px;background:#e1e1e1;"></div>
<div class="a" style="left:908px;top:492px;width:1px;height:20px;background:#e1e1e1;"></div>
<div class="a" style="left:908px;top:513px;width:1px;height:20px;background:#e1e1e1;"></div>
<div class="a" style="left:908px;top:534px;width:1px;height:20px;background:#e1e1e1;"></div>
<div class="a" style="left:908px;top:555px;width:1px;height:20px;background:#e1e1e1;"></div>
<div class="a" style="left:908px;top:576px;width:1px;height:20px;background:#e1e1e1;"></div>
<div class="a" style="left:908px;top:597px;width:1px;height:20px;background:#e1e1e1;"></div>
<div class="a" style="left:908px;top:618px;width:1px;height:20px;background:#e1e1e1;"></div>
<div class="a" style="left:908px;top:639px;width:1px;height:20px;background:#e1e1e1;"></div>
<div class="a" style="left:908px;top:660px;width:1px;height:20px;background:#e1e1e1;"></div>
<div class="a" style="left:908px;top:681px;width:1px;height:20px;background:#e1e1e1;"></div>
<div class="a" style="left:908px;top:702px;width:1px;height:20px;background:#e1e1e1;"></div>
<div class="a" style="left:908px;top:723px;width:1px;height:20px;background:#e1e1e1;"></div>
<div class="a" style="left:991px;top:242px;width:1px;height:40px;background:#e1e1e1;"></div>
<div class="a" style="left:991px;top:283px;width:1px;height:20px;background:#e1e1e1;"></div>
<div class="a" style="left:991px;top:304px;width:1px;height:20px;background:#e1e1e1;"></div>
<div class="a" style="left:991px;top:325px;width:1px;height:20px;background:#e1e1e1;"></div>
<div class="a" style="left:991px;top:346px;width:1px;height:20px;background:#e1e1e1;"></div>
<div class="a" style="left:991px;top:367px;width:1px;height:20px;background:#e1e1e1;"></div>
<div class="a" style="left:991px;top:388px;width:1px;height:20px;background:#e1e1e1;"></div>
<div class="a" style="left:991px;top:409px;width:1px;height:20px;background:#e1e1e1;"></div>
<div class="a" style="left:991px;top:430px;width:1px;height:20px;background:#e1e1e1;"></div>
<div class="a" style="left:991px;top:451px;width:1px;height:20px;background:#e1e1e1;"></div>
<div class="a" style="left:991px;top:472px;width:1px;height:19px;background:#e1e1e1;"></div>
<div class="a" style="left:991px;top:492px;width:1px;height:20px;background:#e1e1e1;"></div>
<div class="a" style="left:991px;top:513px;width:1px;height:20px;background:#e1e1e1;"></div>
<div class="a" style="left:991px;top:534px;width:1px;height:20px;background:#e1e1e1;"></div>
<div class="a" style="left:991px;top:555px;width:1px;height:20px;background:#e1e1e1;"></div>
<div class="a" style="left:991px;top:576px;width:1px;height:20px;background:#e1e1e1;"></div>
<div class="a" style="left:991px;top:597px;width:1px;height:20px;background:#e1e1e1;"></div>
<div class="a" style="left:991px;top:618px;width:1px;height:20px;background:#e1e1e1;"></div>
<div class="a" style="left:991px;top:639px;width:1px;height:20px;background:#e1e1e1;"></div>
<div class="a" style="left:991px;top:660px;width:1px;height:20px;background:#e1e1e1;"></div>
<div class="a" style="left:991px;top:681px;width:1px;height:20px;background:#e1e1e1;"></div>
<div class="a" style="left:991px;top:702px;width:1px;height:20px;background:#e1e1e1;"></div>
<div class="a" style="left:991px;top:723px;width:1px;height:20px;background:#e1e1e1;"></div>
<div class="a" style="left:1074px;top:242px;width:1px;height:40px;background:#e1e1e1;"></div>
<div class="a" style="left:1074px;top:283px;width:1px;height:20px;background:#e1e1e1;"></div>
<div class="a" style="left:1074px;top:304px;width:1px;height:20px;background:#e1e1e1;"></div>
<div class="a" style="left:1074px;top:325px;width:1px;height:20px;background:#e1e1e1;"></div>
<div class="a" style="left:1074px;top:346px;width:1px;height:20px;background:#e1e1e1;"></div>
<div class="a" style="left:1074px;top:367px;width:1px;height:20px;background:#e1e1e1;"></div>
<div class="a" style="left:1074px;top:388px;width:1px;height:20px;background:#e1e1e1;"></div>
<div class="a" style="left:1074px;top:409px;width:1px;height:20px;background:#e1e1e1;"></div>
<div class="a" style="left:1074px;top:430px;width:1px;height:20px;background:#e1e1e1;"></div>
<div class="a" style="left:1074px;top:451px;width:1px;height:20px;background:#e1e1e1;"></div>
<div class="a" style="left:1074px;top:472px;width:1px;height:19px;background:#e1e1e1;"></div>
<div class="a" style="left:1074px;top:492px;width:1px;height:20px;background:#e1e1e1;"></div>
<div class="a" style="left:1074px;top:513px;width:1px;height:20px;background:#e1e1e1;"></div>
<div class="a" style="left:1074px;top:534px;width:1px;height:20px;background:#e1e1e1;"></div>
<div class="a" style="left:1074px;top:555px;width:1px;height:20px;background:#e1e1e1;"></div>
<div class="a" style="left:1074px;top:576px;width:1px;height:20px;background:#e1e1e1;"></div>
<div class="a" style="left:1074px;top:597px;width:1px;height:20px;background:#e1e1e1;"></div>
<div class="a" style="left:1074px;top:618px;width:1px;height:20px;background:#e1e1e1;"></div>
<div class="a" style="left:1074px;top:639px;width:1px;height:20px;background:#e1e1e1;"></div>
<div class="a" style="left:1074px;top:660px;width:1px;height:20px;background:#e1e1e1;"></div>
<div class="a" style="left:1074px;top:681px;width:1px;height:20px;background:#e1e1e1;"></div>
<div class="a" style="left:1074px;top:702px;width:1px;height:20px;background:#e1e1e1;"></div>
<div class="a" style="left:1074px;top:723px;width:1px;height:20px;background:#e1e1e1;"></div>
<div class="a" style="left:1157px;top:242px;width:1px;height:40px;background:#e1e1e1;"></div>
<div class="a" style="left:1157px;top:283px;width:1px;height:20px;background:#e1e1e1;"></div>
<div class="a" style="left:1157px;top:304px;width:1px;height:20px;background:#e1e1e1;"></div>
<div class="a" style="left:1157px;top:325px;width:1px;height:20px;background:#e1e1e1;"></div>
<div class="a" style="left:1157px;top:346px;width:1px;height:20px;background:#e1e1e1;"></div>
<div class="a" style="left:1157px;top:367px;width:1px;height:20px;background:#e1e1e1;"></div>
<div class="a" style="left:1157px;top:388px;width:1px;height:20px;background:#e1e1e1;"></div>
<div class="a" style="left:1157px;top:409px;width:1px;height:20px;background:#e1e1e1;"></div>
<div class="a" style="left:1157px;top:430px;width:1px;height:20px;background:#e1e1e1;"></div>
<div class="a" style="left:1157px;top:451px;width:1px;height:20px;background:#e1e1e1;"></div>
<div class="a" style="left:1157px;top:472px;width:1px;height:19px;background:#e1e1e1;"></div>
<div class="a" style="left:1157px;top:492px;width:1px;height:20px;background:#e1e1e1;"></div>
<div class="a" style="left:1157px;top:513px;width:1px;height:20px;background:#e1e1e1;"></div>
<div class="a" style="left:1157px;top:534px;width:1px;height:20px;background:#e1e1e1;"></div>
<div class="a" style="left:1157px;top:555px;width:1px;height:20px;background:#e1e1e1;"></div>
<div class="a" style="left:1157px;top:576px;width:1px;height:20px;background:#e1e1e1;"></div>
<div class="a" style="left:1157px;top:597px;width:1px;height:20px;background:#e1e1e1;"></div>
<div class="a" style="left:1157px;top:618px;width:1px;height:20px;background:#e1e1e1;"></div>
<div class="a" style="left:1157px;top:639px;width:1px;height:20px;background:#e1e1e1;"></div>
<div class="a" style="left:1157px;top:660px;width:1px;height:20px;background:#e1e1e1;"></div>
<div class="a" style="left:1157px;top:681px;width:1px;height:20px;background:#e1e1e1;"></div>
<div class="a" style="left:1157px;top:702px;width:1px;height:20px;background:#e1e1e1;"></div>
<div class="a" style="left:1157px;top:723px;width:1px;height:20px;background:#e1e1e1;"></div>
<div class="a" style="left:64px;top:512px;width:210px;height:43px;background:#ffff00;"></div>
<div class="a" style="left:64px;top:282px;width:1122px;height:2px;background:#1f1f1f;"></div>
<div class="a" style="left:1186px;top:215px;width:1.5px;height:516px;background:#d0d0d0;"></div>
<div class="a" style="left:1187px;top:215px;width:9px;height:516px;background:#efefef;"></div>
<div class="a" style="left:1194.7px;top:195px;width:1.3px;height:559px;background:#ffffff;"></div>
<div class="a" style="left:1188px;top:217px;width:7px;height:8px;background:#ffffff;border:1px solid #bbb;box-sizing:border-box"></div>
<div class="t" style="left:1189px;top:218px;font-size:6px;color:#222;font-weight:400;">▴</div>
<div class="a" style="left:1188px;top:225px;width:6.7px;height:168px;background:#ffffff;border:1px solid #cfcfcf;border-top:0;box-sizing:border-box;border-radius:0 0 1px 1px"></div>
<div class="a" style="left:1188px;top:723px;width:7px;height:8px;background:#ffffff;border:1px solid #bbb;box-sizing:border-box"></div>
<div class="t" style="left:1189px;top:723px;font-size:6px;color:#222;font-weight:400;">▾</div>
<div class="t" style="left:67px;top:254px;font-size:15px;color:#111;font-weight:700;text-decoration:underline;text-underline-offset:2px">▲ SHEET LIST V2</div>
<div class="t" style="left:67px;top:306.59999999999997px;font-size:16px;color:#111;font-weight:700;letter-spacing:-0.3px;">연산자</div>
<div class="t" style="left:67px;top:348.5px;font-size:16px;color:#111;font-weight:400;letter-spacing:-0.3px;">수식의 요소에 대해 수행할 계산의 종류를 지정합니다.</div>
<div class="t" style="left:67px;top:369.45px;font-size:16px;color:#111;font-weight:400;letter-spacing:-0.3px;letter-spacing:-0.2px">Microsoft Excel에는 <b style="color:#0000ee">산술, 비교, 텍스트, 참조</b> 등 네 가지의 계산 연산자가 있습니다.</div>
<div class="t" style="left:67px;top:411.34999999999997px;font-size:16px;color:#111;font-weight:700;letter-spacing:-0.3px;word-spacing:3px">1) 산술연산자</div>
<div class="t" style="left:90px;top:432.3px;font-size:16px;color:#111;font-weight:400;letter-spacing:-0.3px;">더하기, 빼기, 곱하기와 같은 기본적인 수학 연산을 수행하고 숫자를 결합하여 수치 결과를 얻으려면</div>
<div class="t" style="left:90px;top:453.24999999999994px;font-size:16px;color:#111;font-weight:400;letter-spacing:-0.3px;">다음과 같은 산술 연산자를 사용합니다.</div>
<div class="t" style="left:108px;top:474.2px;font-size:16px;color:#111;font-weight:400;letter-spacing:-0.3px;word-spacing:1.5px">+ , - , * , / , % , ^ .</div>
<div class="t" style="left:276px;top:516.1px;font-size:16px;color:#111;font-weight:400;letter-spacing:-0.3px;">3더하기 3은?</div>
<div class="t" style="left:276px;top:537.05px;font-size:16px;color:#111;font-weight:400;letter-spacing:-0.3px;">6나누기 6은?</div>
<div class="t" style="left:67px;top:578.95px;font-size:16px;color:#111;font-weight:700;letter-spacing:-0.3px;word-spacing:3px">2) 비교연산자</div>
<div class="t" style="left:90px;top:599.9000000000001px;font-size:16px;color:#111;font-weight:400;letter-spacing:-0.3px;">다음과 같은 연산자로 두 개의 값을 비교할 수 있습니다. 이러한 연산자로 두 값을 비교하면 결과는</div>
<div class="t" style="left:90px;top:620.85px;font-size:16px;color:#111;font-weight:400;letter-spacing:-0.3px;"><span style="letter-spacing:-1.4px">TRUE</span>나 <span style="letter-spacing:-1.4px">FALSE</span>와 같은 논리값입니다.</div>
<div class="t" style="left:101px;top:641.8px;font-size:16px;color:#111;font-weight:400;letter-spacing:-0.3px;">=(등호)</div>
<div class="t" style="left:276px;top:641.8px;font-size:16px;color:#111;font-weight:400;letter-spacing:-0.3px;">같음(A1=B1)</div>
<div class="t" style="left:101px;top:662.75px;font-size:16px;color:#111;font-weight:400;letter-spacing:-0.3px;">&gt;(보다 큼 기호)</div>
<div class="t" style="left:276px;top:662.75px;font-size:16px;color:#111;font-weight:400;letter-spacing:-0.3px;">보다 큼(A1&gt;B1)</div>
<div class="t" style="left:101px;top:683.7px;font-size:16px;color:#111;font-weight:400;letter-spacing:-0.3px;">&lt;(보다 작음 기호)</div>
<div class="t" style="left:276px;top:683.7px;font-size:16px;color:#111;font-weight:400;letter-spacing:-0.3px;">보다 작음(A1&lt;B1)</div>
<div class="t" style="left:101px;top:704.6500000000001px;font-size:16px;color:#111;font-weight:400;letter-spacing:-0.3px;">&gt;=(크거나 같음 기호)</div>
<div class="t" style="left:276px;top:704.6500000000001px;font-size:16px;color:#111;font-weight:400;letter-spacing:-0.3px;">크거나 같음(A1&gt;=B1)</div>
<div class="t" style="left:101px;top:725.6px;font-size:16px;color:#111;font-weight:400;letter-spacing:-0.3px;top:727px">&lt;=(작거나 같음 기호)</div>
<div class="t" style="left:276px;top:725.6px;font-size:16px;color:#111;font-weight:400;letter-spacing:-0.3px;top:727px">작거나 같음(A1&lt;=B1)</div>
<div class="a" style="left:273px;top:471px;width:553px;height:22px;background:transparent;border:1px solid #1e6b41;box-sizing:border-box"></div>
<div class="a" style="left:824px;top:491px;width:3px;height:3px;background:#1e6b41;"></div>
<svg class="a" style="left:635px;top:393px" width="9" height="9" viewBox="0 0 9 9"><circle cx="4.4" cy="4.1" r="3.1" stroke="#111" stroke-width="1.3" fill="#fff" stroke-dasharray="3.5 1.4"/></svg>
<div class="a" style="left:4px;top:731px;width:1192px;height:13px;background:#e6e6e6;"></div>
<div class="a" style="left:4px;top:731px;width:1192px;height:1px;background:#c8c8c8;"></div>
<div class="t" style="left:16px;top:733px;font-size:7px;color:#bbb;font-weight:400;">◂</div>
<div class="t" style="left:29px;top:733px;font-size:7px;color:#217346;font-weight:400;">▸</div>
<div class="a" style="left:51px;top:733px;width:1px;height:10px;background:#bbb;"></div>
<div class="t" style="left:58px;top:734.3px;font-size:5.8px;color:#555;font-weight:400;">SheetListV2</div>
<div class="a" style="left:97px;top:732px;width:30px;height:11px;background:#000;"></div>
<div class="t" style="left:112.0px;top:734.3px;font-size:6.3px;color:#fff;font-weight:400;transform:translateX(-50%)">기초&gt;&gt;</div>
<div class="t" style="left:134px;top:734.3px;font-size:6.3px;color:#555;font-weight:400;">입문</div>
<div class="t" style="left:157px;top:734.3px;font-size:6.3px;color:#555;font-weight:400;">단축키</div>
<div class="t" style="left:186px;top:734.3px;font-size:6.3px;color:#555;font-weight:400;">엑셀전체단축키</div>
<div class="t" style="left:240px;top:734.3px;font-size:6.3px;color:#555;font-weight:400;">채우기핸들</div>
<div class="a" style="left:276px;top:732px;width:38px;height:11px;background:#c6e0b4;"></div>
<div class="t" style="left:295.0px;top:734.3px;font-size:6.3px;color:#333;font-weight:400;transform:translateX(-50%)">날짜(서식)</div>
<div class="a" style="left:316px;top:732px;width:34px;height:11px;background:#c6e0b4;"></div>
<div class="t" style="left:333.0px;top:734.3px;font-size:6.3px;color:#333;font-weight:400;transform:translateX(-50%)">표시형식</div>
<div class="a" style="left:351px;top:732px;width:29px;height:11px;background:#ffffff;"></div>
<div class="t" style="left:365.5px;top:734.3px;font-size:6.3px;color:#217346;font-weight:400;transform:translateX(-50%)">연산자</div>
<div class="t" style="left:386px;top:734.3px;font-size:6.3px;color:#555;font-weight:400;">붙여넣기</div>
<div class="t" style="left:421px;top:734.3px;font-size:6.3px;color:#555;font-weight:400;">필터</div>
<div class="t" style="left:445px;top:734.3px;font-size:6.3px;color:#555;font-weight:400;">기타</div>
<div class="a" style="left:463px;top:732px;width:28px;height:11px;background:#f8cbad;"></div>
<div class="t" style="left:477.0px;top:734.3px;font-size:6.3px;color:#333;font-weight:400;transform:translateX(-50%)">틀고정</div>
<div class="t" style="left:496px;top:734.3px;font-size:6.3px;color:#555;font-weight:400;">텍스트나누기</div>
<div class="t" style="left:544px;top:734.3px;font-size:6.3px;color:#555;font-weight:400;">중복항목제거</div>
<div class="t" style="left:592px;top:734.3px;font-size:6.3px;color:#555;font-weight:400;">조건부서식(트리)</div>
<div class="a" style="left:646px;top:732px;width:33px;height:11px;background:#7030a0;"></div>
<div class="t" style="left:662.5px;top:734.3px;font-size:6.3px;color:#fff;font-weight:400;transform:translateX(-50%)">&gt;&gt;&gt;중급</div>
<div class="a" style="left:351px;top:742px;width:29px;height:1.5px;background:#217346;"></div>
<div class="a" style="left:128px;top:733px;width:1px;height:10px;background:#c8c8c8;"></div>
<div class="a" style="left:151px;top:733px;width:1px;height:10px;background:#c8c8c8;"></div>
<div class="a" style="left:181px;top:733px;width:1px;height:10px;background:#c8c8c8;"></div>
<div class="a" style="left:234px;top:733px;width:1px;height:10px;background:#c8c8c8;"></div>
<div class="a" style="left:274px;top:733px;width:1px;height:10px;background:#c8c8c8;"></div>
<div class="a" style="left:416px;top:733px;width:1px;height:10px;background:#c8c8c8;"></div>
<div class="a" style="left:439px;top:733px;width:1px;height:10px;background:#c8c8c8;"></div>
<div class="a" style="left:460px;top:733px;width:1px;height:10px;background:#c8c8c8;"></div>
<div class="a" style="left:539px;top:733px;width:1px;height:10px;background:#c8c8c8;"></div>
<div class="a" style="left:586px;top:733px;width:1px;height:10px;background:#c8c8c8;"></div>
<div class="t" style="left:686px;top:733px;font-size:6px;color:#999;font-weight:400;">⋮</div>
<div class="a" style="left:689px;top:738px;width:5px;height:1px;background:#217346;"></div>
<div class="a" style="left:702px;top:734px;width:7px;height:7px;border:1px solid #555;border-radius:50%;box-sizing:border-box"></div>
<div class="t" style="left:703.5px;top:733px;font-size:7px;color:#555;font-weight:400;">+</div>
<div class="t" style="left:719px;top:733px;font-size:6px;color:#bbb;font-weight:400;">⋮</div>
<div class="a" style="left:728px;top:733px;width:14px;height:9px;background:#ffffff;border:1px solid #aaa;box-sizing:border-box"></div>
<div class="t" style="left:729px;top:733.5px;font-size:6px;color:#222;font-weight:400;">◂</div>
<div class="a" style="left:1180px;top:734px;width:7px;height:7px;background:#ffffff;border:1px solid #aaa;box-sizing:border-box"></div>
<div class="t" style="left:1181px;top:734px;font-size:5.5px;color:#222;font-weight:400;">▸</div>
<div class="a" style="left:1187px;top:731px;width:9px;height:13px;background:#e6e6e6;"></div>
<div class="a" style="left:4px;top:744px;width:1192px;height:10px;background:#f4f1f0;"></div>
<div class="t" style="left:8px;top:745.5px;font-size:6px;color:#555;font-weight:400;">준비</div>
<div class="t" style="left:27px;top:745.5px;font-size:6px;color:#555;font-weight:400;">시트 10 / 52</div>
<svg class="a" style="left:67.5px;top:745px" width="7" height="8" viewBox="0 0 7 8"><circle cx="3.5" cy="1.3" r="1.1" fill="#555"/><path d="M0.5 3 H6.5 M3.5 3 V5 L1.5 7.5 M3.5 5 L5.5 7.5" stroke="#555" stroke-width="0.9" fill="none"/></svg>
<div class="t" style="left:75px;top:745.5px;font-size:6px;color:#555;font-weight:400;">접근성: 조사 필요</div>
<div class="a" style="left:1055px;top:744px;width:18px;height:10px;background:#d9d9d9;"></div>
<svg class="a" style="left:1060px;top:746px" width="7" height="6" viewBox="0 0 7 6"><rect x="0.5" y="0.5" width="6" height="5" fill="#777"/><path d="M2.5 0.5 V5.5 M4.5 0.5 V5.5 M0.5 2.2 H6.5 M0.5 3.8 H6.5" stroke="#bbb" stroke-width="0.4"/></svg>
<svg class="a" style="left:1079px;top:746px" width="7" height="6" viewBox="0 0 7 6"><rect x="0.5" y="0.5" width="6" height="5" stroke="#555" stroke-width="0.7" fill="none"/><path d="M2 0.5 V5.5 M5 0.5 V5.5 M2 3 L5 0.8 M2 3 L5 5.2" stroke="#555" stroke-width="0.6" fill="none"/></svg>
<svg class="a" style="left:1098px;top:746px" width="7" height="6" viewBox="0 0 7 6"><rect x="0.5" y="0.5" width="6" height="5" stroke="#666" stroke-width="0.7" fill="none"/><path d="M1.5 2 H3.5 V4" stroke="#666" stroke-width="0.5" fill="none"/></svg>
<div class="a" style="left:1113.5px;top:749px;width:3.5px;height:0.8px;background:#666;"></div>
<div class="a" style="left:1120px;top:749px;width:45.5px;height:0.7px;background:#888;"></div>
<div class="a" style="left:1142.5px;top:748px;width:1.3px;height:2.5px;background:#666;"></div>
<div class="a" style="left:1153.5px;top:746.5px;width:1.8px;height:5px;background:#333;"></div>
<svg class="a" style="left:1168px;top:747.5px" width="4" height="4" viewBox="0 0 4 4"><path d="M0 1.5 H4 L2 3.5 Z" fill="#666"/><path d="M2 0 V2" stroke="#666" stroke-width="0.5"/></svg>
<div class="t" style="left:1178px;top:745.8px;font-size:6px;color:#555;font-weight:400;">250%</div>
<div class="a" style="left:4px;top:754px;width:1192px;height:1px;background:#000000;"></div>
<div class="a" style="left:4px;top:755px;width:1191px;height:18px;background:#1f2231;"></div>
<div class="a" style="left:1194px;top:755px;width:1px;height:18px;background:#6a6e7a;"></div>
<div class="a" style="left:4px;top:755px;width:23px;height:17.5px;background:#282828;"></div>
<svg class="a" style="left:12px;top:758px" width="10" height="10" viewBox="0 0 10 10"><path d="M0 1.2 L4.3 0.6 V4.6 H0 Z M5 0.5 L10 0 V4.6 H5 Z M0 5.3 H4.3 V9.4 L0 8.8 Z M5 5.3 H10 V10 L5 9.5 Z" fill="#fff"/></svg>
<div class="a" style="left:27px;top:755px;width:134px;height:17.5px;background:#f3f3f3;border-top:1px solid #fff;border-left:1px solid #fff;box-sizing:border-box"></div>
<svg class="a" style="left:33px;top:758px" width="10" height="10" viewBox="0 0 10 10"><circle cx="6" cy="4" r="3" stroke="#222" stroke-width="1" fill="none"/><path d="M3.8 6.2 L0.8 9.2" stroke="#222" stroke-width="1.1"/></svg>
<div class="t" style="left:46px;top:758.5px;font-size:8px;color:#333;font-weight:400;">찾기</div>
<svg class="a" style="left:124px;top:755px" width="37" height="17" viewBox="0 0 37 17"><path d="M0 17 C6 12 12 11 20 11.5 C28 12 33 13 37 13 V17 Z" fill="#efc89a"/><path d="M5 4.5 L13 3 L16 13 L7 15 Z" fill="#f4f0fb" stroke="#3a8a3a" stroke-width="1"/><path d="M12 9 L16 2.5" stroke="#f2a53a" stroke-width="1.6"/><circle cx="16.5" cy="2" r="1.2" fill="#e84a3a"/><path d="M3.5 1.5 L4.2 3 L5.8 3.5 L4.2 4 L3.5 5.5 L2.8 4 L1.2 3.5 L2.8 3 Z" fill="#d66ef0"/><circle cx="18" cy="9.5" r="0.9" fill="#4ab8e8"/><path d="M23.5 5 C23.5 2 26 1 28 1 C30 1 32.5 2 32.5 5 V14.5 C32.5 15.5 31.5 16 30.5 16 H25.5 C24.5 16 23.5 15.5 23.5 14.5 Z" fill="#2a6ef0"/><path d="M25 13 C26 14.5 30 14.5 31 13" stroke="#b58cf0" stroke-width="1.2" fill="none"/><rect x="33.5" y="3.5" width="1.8" height="1.8" fill="#f5b21e"/></svg>
<div class="a" style="left:344px;top:755px;width:22.5px;height:17.5px;background:#3b3e48;"></div>
<div class="a" style="left:459px;top:755px;width:21px;height:17.5px;background:#b8662a;"></div>
<svg class="a" style="left:164.5px;top:757px" width="12" height="12" viewBox="0 0 12 12"><rect x="1" y="3" width="3" height="6" stroke="#ddd" stroke-width="0.8" fill="none"/><rect x="5" y="2" width="5" height="8" stroke="#ddd" stroke-width="0.8" fill="#555"/><path d="M11 3 V9" stroke="#ddd" stroke-width="0.8"/></svg>
<svg class="a" style="left:189.5px;top:757px" width="12" height="12" viewBox="0 0 12 12"><path d="M1 2.5 H5 L6 3.5 H11 V10.5 H1 Z" fill="#f6c343"/><rect x="1" y="5" width="10" height="5.5" fill="#ffd86b"/><rect x="2" y="7" width="8" height="2" fill="#3b82c4"/></svg>
<div class="a" style="left:187.5px;top:771px;width:16px;height:1.2px;background:#8ab4e6;"></div>
<svg class="a" style="left:212.3px;top:757px" width="12" height="12" viewBox="0 0 12 12"><circle cx="6" cy="6" r="5.3" fill="#db4437"/><path d="M6 6 L11.2 4.5 A5.3 5.3 0 0 1 6 11.3 Z" fill="#f4c20d"/><path d="M6 6 L6 11.3 A5.3 5.3 0 0 1 0.8 4.5 Z" fill="#0f9d58"/><circle cx="6" cy="6" r="2.6" fill="#fff"/><circle cx="6" cy="6" r="1.9" fill="#4285f4"/></svg>
<div class="a" style="left:210.3px;top:771px;width:16px;height:1.2px;background:#8ab4e6;"></div>
<svg class="a" style="left:234.5px;top:757px" width="12" height="12" viewBox="0 0 12 12"><circle cx="6" cy="6" r="5.3" fill="#1f8dd6"/><path d="M1.5 7 C2 3 8 2 10.5 5 C9 4.5 6 5 6 7 C6 9 9 10 10 9.5 C8 11.5 3 11.5 1.5 7 Z" fill="#47d18a"/><circle cx="4" cy="9" r="2.2" fill="#777"/><path d="M4 8 V10" stroke="#fff" stroke-width="0.8"/></svg>
<svg class="a" style="left:257.8px;top:757px" width="12" height="12" viewBox="0 0 12 12"><rect x="0.5" y="0.5" width="11" height="11" fill="#fae100"/><ellipse cx="6" cy="5.8" rx="4" ry="3" fill="#3a1d1d"/><path d="M3.5 8 L3 10 L5 8.5" fill="#3a1d1d"/></svg>
<svg class="a" style="left:281.0px;top:757px" width="12" height="12" viewBox="0 0 12 12"><circle cx="7" cy="5" r="3.3" stroke="#f07f1e" stroke-width="1.7" fill="none"/><path d="M4.6 7.4 L1.5 10.5" stroke="#f07f1e" stroke-width="2"/></svg>
<svg class="a" style="left:303.3px;top:757px" width="12" height="12" viewBox="0 0 12 12"><rect x="1" y="0.5" width="10" height="11" rx="1.5" fill="#3565b8"/><path d="M3.5 9.5 L6 2.5 L8.5 9.5 M4.5 7 H7.5" stroke="#fff" stroke-width="1.1" fill="none"/></svg>
<svg class="a" style="left:325.5px;top:757px" width="12" height="12" viewBox="0 0 12 12"><path d="M11 2 C7 0.5 1 2 1.5 5 C2 7.5 10 6 10.5 8.5 C11 10.5 5 11.5 1 10.5" stroke="#3b8be0" stroke-width="2" fill="none"/></svg>
<div class="a" style="left:323.5px;top:771px;width:16px;height:1.2px;background:#8ab4e6;"></div>
<svg class="a" style="left:348.8px;top:757px" width="12" height="12" viewBox="0 0 12 12"><rect x="3.5" y="1" width="8" height="10" fill="#21a366"/><path d="M3.5 4.3 H11.5 M3.5 7.6 H11.5" stroke="#107c41" stroke-width="0.7"/><rect x="0.5" y="2.5" width="7" height="7" fill="#107c41"/><path d="M2.2 4 L5.8 8 M5.8 4 L2.2 8" stroke="#fff" stroke-width="1"/></svg>
<div class="a" style="left:346.8px;top:771px;width:16px;height:1.2px;background:#8ab4e6;"></div>
<svg class="a" style="left:372.0px;top:757px" width="12" height="12" viewBox="0 0 12 12"><rect x="2" y="1" width="7" height="9" stroke="#ddd" stroke-width="0.9" fill="#333"/><path d="M3.5 3.5 H7.5 M3.5 5.5 H7.5" stroke="#ddd" stroke-width="0.7"/><circle cx="9" cy="9" r="2.5" fill="#e5483e"/></svg>
<div class="a" style="left:370px;top:771px;width:16px;height:1.2px;background:#8ab4e6;"></div>
<svg class="a" style="left:394.3px;top:757px" width="12" height="12" viewBox="0 0 12 12"><ellipse cx="5.5" cy="6" rx="5" ry="4" fill="#d9d9d9" transform="rotate(-20 6 6)"/><path d="M4 8 L9 4" stroke="#b33" stroke-width="1"/><path d="M7 8 L11 11" stroke="#3a6fd8" stroke-width="1.5"/></svg>
<svg class="a" style="left:417.6px;top:757px" width="12" height="12" viewBox="0 0 12 12"><path d="M1.5 3 L8 0.5 L11 3 V10 L4.5 11.5 L1.5 9.5 Z" fill="#4ba3e8"/><path d="M6 3 V9 M4.5 5 H7" stroke="#fff" stroke-width="1.2"/></svg>
<svg class="a" style="left:440.3px;top:757px" width="12" height="12" viewBox="0 0 12 12"><rect x="1" y="1" width="10" height="10" fill="#1f2a5a"/><path d="M6 2 L9 7 H3 Z" stroke="#ddd" stroke-width="0.7" fill="none"/><path d="M3 9 H9" stroke="#ddd" stroke-width="0.7"/></svg>
<div class="a" style="left:438.3px;top:771px;width:16px;height:1.2px;background:#8ab4e6;"></div>
<svg class="a" style="left:463.7px;top:757px" width="12" height="12" viewBox="0 0 12 12"><circle cx="6" cy="5" r="4" fill="#e8eef5"/><path d="M3 4 C4 2 7 2 8 4" stroke="#e89a3a" stroke-width="1.2" fill="none"/><path d="M6 9 V11.5" stroke="#ddd" stroke-width="1"/></svg>
<svg class="a" style="left:485.8px;top:757px" width="12" height="12" viewBox="0 0 12 12"><circle cx="6" cy="6" r="5" fill="#e62117"/><circle cx="6" cy="6" r="3" stroke="#fff" stroke-width="0.8" fill="none"/><path d="M5.2 4.5 L7.5 6 L5.2 7.5 Z" fill="#fff"/></svg>
<svg class="a" style="left:509.0px;top:757px" width="12" height="12" viewBox="0 0 12 12"><path d="M6 1 V11" stroke="#ddd" stroke-width="1"/><path d="M3 2 C5 3 5 5 3 6 M9 2 C7 3 7 5 9 6" stroke="#e24b3b" stroke-width="1.3" fill="none"/><circle cx="6" cy="9.5" r="2" fill="#3b7fd8"/></svg>
<svg class="a" style="left:531.3px;top:757px" width="12" height="12" viewBox="0 0 12 12"><rect x="4" y="1" width="7.5" height="10" fill="#41a5ee"/><path d="M4 4.5 H11.5 M4 7.5 H11.5" stroke="#2b7cd3" stroke-width="0.8"/><rect x="0.5" y="2.5" width="7" height="7" fill="#185abd"/><path d="M1.8 4 L2.8 8 L4 5.5 L5.2 8 L6.2 4" stroke="#fff" stroke-width="0.7" fill="none"/></svg>
<svg class="a" style="left:554.7px;top:757px" width="12" height="12" viewBox="0 0 12 12"><rect x="1" y="2" width="10" height="8.5" fill="#eee"/><rect x="2" y="3" width="8" height="2" fill="#777"/><rect x="2" y="6" width="8" height="3.5" fill="#e25c3b"/><path d="M2 8 L5 6 L8 8.5" stroke="#58a" stroke-width="0.8" fill="none"/></svg>
<svg class="a" style="left:576.8px;top:757px" width="12" height="12" viewBox="0 0 12 12"><rect x="0.5" y="1" width="11" height="10" rx="1" fill="#ea4a1f"/><path d="M3 5 H6 M4.5 3.5 V6.5 M7 4 H9 M8 3 V5" stroke="#fff" stroke-width="0.8"/></svg>
<div class="a" style="left:574.8px;top:771px;width:16px;height:1.2px;background:#8ab4e6;"></div>
<svg class="a" style="left:600.0px;top:757px" width="12" height="12" viewBox="0 0 12 12"><circle cx="6" cy="6.3" r="4.2" stroke="#4aa8e8" stroke-width="1.6" fill="none"/><path d="M2 6.5 H10" stroke="#4aa8e8" stroke-width="1.4"/><path d="M1 3 C4 -0.5 12 1 11 4" stroke="#f2c230" stroke-width="1" fill="none"/></svg>
<div class="a" style="left:598px;top:771px;width:16px;height:1.2px;background:#8ab4e6;"></div>
<svg class="a" style="left:623.5px;top:757px" width="12" height="12" viewBox="0 0 12 12"><rect x="0.5" y="0.5" width="11" height="11" fill="#d83b3b"/><circle cx="6" cy="6.5" r="3.5" stroke="#fff" stroke-width="0.9" fill="none"/><path d="M3 9 C4 6 7 4 10 3" stroke="#fff" stroke-width="0.9" fill="none"/></svg>
<div class="a" style="left:621.5px;top:771px;width:16px;height:1.2px;background:#8ab4e6;"></div>
<svg class="a" style="left:645.7px;top:757px" width="12" height="12" viewBox="0 0 12 12"><circle cx="7" cy="6" r="4.8" fill="#ed6c47"/><rect x="0.5" y="2.5" width="7" height="7" fill="#c43e1c"/><path d="M2.8 8 V4 H4.5 C6 4 6 6.2 4.5 6.2 H2.8" stroke="#fff" stroke-width="0.8" fill="none"/></svg>
<div class="a" style="left:643.7px;top:771px;width:16px;height:1.2px;background:#8ab4e6;"></div>
<svg class="a" style="left:669.0px;top:757px" width="12" height="12" viewBox="0 0 12 12"><path d="M1 3 L10 2 V10 L1 9 Z" fill="#2c5aa0"/><path d="M3 4 L8 8 M5 4 H8 V7" stroke="#cfe" stroke-width="0.9" fill="none"/></svg>
<div class="a" style="left:667px;top:771px;width:16px;height:1.2px;background:#8ab4e6;"></div>
<svg class="a" style="left:692.3px;top:757px" width="12" height="12" viewBox="0 0 12 12"><circle cx="6" cy="6" r="5.3" fill="#2d8cff"/><path d="M3.5 3.5 H8.3 L3.5 8.5 H8.5" stroke="#fff" stroke-width="1.3" fill="none"/></svg>
<div class="a" style="left:690.3px;top:771px;width:16px;height:1.2px;background:#8ab4e6;"></div>
<div class="t" style="left:1051.5px;top:759.8px;font-size:7px;color:#f0f0f0;font-weight:400;">24°C 대체로 흐림</div>
<svg class="a" style="left:1036px;top:756px" width="13" height="12" viewBox="0 0 13 12"><circle cx="8" cy="4" r="3" fill="#f5a623"/><path d="M2.5 11.5 H10 C11.5 11.5 12.5 10.5 12.5 9.2 C12.5 8 11.5 7 10.3 7 C9.8 5.5 8.5 4.6 7 4.6 C5.3 4.6 4 5.8 3.8 7.3 C2.2 7.3 1 8.3 1 9.5 C1 10.6 1.8 11.5 2.5 11.5 Z" fill="#a9c6ef"/></svg>
<svg class="a" style="left:1116px;top:761px" width="7" height="4" viewBox="0 0 7 4"><path d="M0.5 3.5 L3.5 0.7 L6.5 3.5" stroke="#eee" stroke-width="0.9" fill="none"/></svg>
<div class="t" style="left:1126px;top:759.5px;font-size:7px;color:#eee;font-weight:400;">가</div>
<div class="t" style="left:1141.4px;top:756.3px;font-size:6px;color:#eee;font-weight:400;letter-spacing:-0.1px">오후 6:05</div>
<div class="t" style="left:1137.7px;top:764.5px;font-size:6.2px;color:#eee;font-weight:400;">2023-05-02</div>
<svg class="a" style="left:1176.5px;top:759.5px" width="9" height="9" viewBox="0 0 9 9"><path d="M0.5 0.5 H8.5 V6 H4 L2 8 V6 H0.5 Z" stroke="#fff" stroke-width="0.9" fill="none"/><path d="M2.5 2.5 H6.5 M2.5 4 H6.5" stroke="#fff" stroke-width="0.7"/></svg>
<svg class="a" style="left:28px;top:836px" width="20" height="20" viewBox="0 0 20 20"><rect x="7" y="2" width="6" height="10" rx="3" fill="#9a9a9a"/><path d="M4.5 9 C4.5 13 7 15 10 15 C13 15 15.5 13 15.5 9" stroke="#9a9a9a" stroke-width="1.4" fill="none"/><path d="M10 15 V18 M7 18 H13" stroke="#9a9a9a" stroke-width="1.4"/><path d="M2 18 L18 2" stroke="#e0383e" stroke-width="1.5"/></svg>
<div class="t" style="left:36.5px;top:860px;font-size:10px;color:#d9d9d9;font-weight:400;transform:translateX(-50%)">음소거 해제</div>
<svg class="a" style="left:59.5px;top:844px" width="7" height="5" viewBox="0 0 7 5"><path d="M1 4 L3.5 1.3 L6 4" stroke="#cfcfcf" stroke-width="1.1" fill="none"/></svg>
<svg class="a" style="left:101px;top:839px" width="22" height="14" viewBox="0 0 22 14"><rect x="0.5" y="0.5" width="14" height="13" rx="3" fill="#c8c8c8"/><path d="M15.5 5 L21.5 1.5 V12.5 L15.5 9 Z" fill="#c8c8c8"/></svg>
<div class="t" style="left:112px;top:860px;font-size:10px;color:#d9d9d9;font-weight:400;transform:translateX(-50%)">비디오 중지</div>
<svg class="a" style="left:139.5px;top:844px" width="7" height="5" viewBox="0 0 7 5"><path d="M1 4 L3.5 1.3 L6 4" stroke="#cfcfcf" stroke-width="1.1" fill="none"/></svg>
<svg class="a" style="left:457px;top:837px" width="18" height="19" viewBox="0 0 18 19"><path d="M9 0.5 L17 3.5 V9 C17 13.5 13.5 17 9 18.5 C4.5 17 1 13.5 1 9 V3.5 Z" fill="#c8c8c8"/><path d="M9 2 V17 C12.5 15.7 15.5 12.8 15.5 9 H9 Z" fill="#1a1a1a" opacity="0.55"/></svg>
<div class="t" style="left:466px;top:860px;font-size:10px;color:#d9d9d9;font-weight:400;transform:translateX(-50%)">보안</div>
<svg class="a" style="left:541px;top:839px" width="20" height="15" viewBox="0 0 20 15"><circle cx="7" cy="4" r="3.6" fill="#c8c8c8"/><path d="M0 14.5 C0 10 3 8.5 7 8.5 C11 8.5 14 10 14 14.5 Z" fill="#c8c8c8"/><circle cx="14.5" cy="4.5" r="3" fill="#c8c8c8"/><path d="M12 9 C16.5 8.5 19.5 10.5 19.5 14.5 H15 C15 12 14 10.2 12 9 Z" fill="#c8c8c8"/></svg>
<div class="t" style="left:564px;top:840px;font-size:10px;color:#e8e8e8;font-weight:400;">53</div>
<div class="t" style="left:551px;top:860px;font-size:10px;color:#d9d9d9;font-weight:400;transform:translateX(-50%)">참가자</div>
<svg class="a" style="left:591px;top:844px" width="7" height="5" viewBox="0 0 7 5"><path d="M1 4 L3.5 1.3 L6 4" stroke="#cfcfcf" stroke-width="1.1" fill="none"/></svg>
<svg class="a" style="left:627px;top:838px" width="18" height="17" viewBox="0 0 18 17"><rect x="1" y="8" width="4" height="9" rx="1" fill="#c8c8c8"/><rect x="7" y="1" width="4" height="16" rx="1" fill="#c8c8c8"/><rect x="13" y="5" width="4" height="12" rx="1" fill="#c8c8c8"/></svg>
<div class="t" style="left:637px;top:860px;font-size:10px;color:#d9d9d9;font-weight:400;transform:translateX(-50%)">설문조사</div>
<svg class="a" style="left:696px;top:838px" width="19" height="17" viewBox="0 0 19 17"><path d="M3.5 0.5 H15.5 C17.2 0.5 18.5 1.8 18.5 3.5 V9.5 C18.5 11.2 17.2 12.5 15.5 12.5 H8 L3.5 16.5 V12.5 C1.8 12.5 0.5 11.2 0.5 9.5 V3.5 C0.5 1.8 1.8 0.5 3.5 0.5 Z" fill="#c8c8c8"/></svg>
<div class="t" style="left:705.5px;top:860px;font-size:10px;color:#d9d9d9;font-weight:400;transform:translateX(-50%)">채팅</div>
<svg class="a" style="left:729.5px;top:844px" width="7" height="5" viewBox="0 0 7 5"><path d="M1 4 L3.5 1.3 L6 4" stroke="#cfcfcf" stroke-width="1.1" fill="none"/></svg>
<svg class="a" style="left:772px;top:840px" width="20" height="15" viewBox="0 0 20 15"><rect x="0" y="0" width="20" height="15" rx="3" fill="#23d15a"/><path d="M10 3 V12 M6.3 6.5 L10 2.8 L13.7 6.5" stroke="#111" stroke-width="1.7" fill="none"/></svg>
<div class="t" style="left:781.5px;top:860px;font-size:10px;color:#23d15a;font-weight:400;transform:translateX(-50%)">화면 공유</div>
<svg class="a" style="left:809.5px;top:844px" width="7" height="5" viewBox="0 0 7 5"><path d="M1 4 L3.5 1.3 L6 4" stroke="#cfcfcf" stroke-width="1.1" fill="none"/></svg>
<svg class="a" style="left:853px;top:837px" width="38" height="18" viewBox="0 0 38 18"><rect x="0" y="0" width="17" height="18" rx="2.5" fill="#c8c8c8"/><rect x="5" y="4.5" width="2.2" height="9" fill="#1a1a1a"/><rect x="9.8" y="4.5" width="2.2" height="9" fill="#1a1a1a"/><rect x="20" y="0" width="17" height="18" rx="2.5" fill="#c8c8c8"/><rect x="24.5" y="4.5" width="8" height="9" fill="#1a1a1a"/></svg>
<div class="t" style="left:871.5px;top:860px;font-size:10px;color:#d9d9d9;font-weight:400;transform:translateX(-50%)">기록 일시 중지/중지</div>
<svg class="a" style="left:945px;top:838px" width="17" height="17" viewBox="0 0 17 17"><rect x="0" y="0" width="7.5" height="7.5" rx="1.5" fill="#c8c8c8"/><rect x="9.5" y="0" width="7.5" height="7.5" rx="1.5" fill="#c8c8c8"/><rect x="0" y="9.5" width="7.5" height="7.5" rx="1.5" fill="#c8c8c8"/><rect x="9.5" y="9.5" width="7.5" height="7.5" rx="1.5" fill="#c8c8c8"/></svg>
<div class="t" style="left:954px;top:860px;font-size:10px;color:#d9d9d9;font-weight:400;transform:translateX(-50%)">소회의실</div>
<svg class="a" style="left:1009px;top:839px" width="20" height="15" viewBox="0 0 20 15"><path d="M1 4 V2.5 C1 1.7 1.7 1 2.5 1 H17.5 C18.3 1 19 1.7 19 2.5 V12.5 C19 13.3 18.3 14 17.5 14 H10" stroke="#c8c8c8" stroke-width="1.5" fill="none"/><path d="M1 7 C4.5 7 7.5 10 7.5 14 M1 10 C2.8 10 4.5 11.7 4.5 14" stroke="#c8c8c8" stroke-width="1.4" fill="none"/><circle cx="1.6" cy="13.4" r="1.2" fill="#c8c8c8"/></svg>
<div class="t" style="left:1019px;top:860px;font-size:10px;color:#d9d9d9;font-weight:400;transform:translateX(-50%)">지원</div>
<svg class="a" style="left:1076px;top:836px" width="20" height="19" viewBox="0 0 20 19"><circle cx="8.5" cy="10.5" r="8" fill="#c8c8c8"/><circle cx="5.8" cy="8.8" r="1.2" fill="#1a1a1a"/><circle cx="11.2" cy="8.8" r="1.2" fill="#1a1a1a"/><path d="M4.8 12 C6 15 11 15 12.2 12 Z" fill="#1a1a1a"/><path d="M16 0.5 V6 M13.2 3.2 H18.8" stroke="#c8c8c8" stroke-width="1.5"/></svg>
<div class="t" style="left:1085px;top:860px;font-size:10px;color:#d9d9d9;font-weight:400;transform:translateX(-50%)">반응</div>
<svg class="a" style="left:1104.5px;top:844px" width="7" height="5" viewBox="0 0 7 5"><path d="M1 4 L3.5 1.3 L6 4" stroke="#cfcfcf" stroke-width="1.1" fill="none"/></svg>
<svg class="a" style="left:1147px;top:838px" width="19" height="17" viewBox="0 0 19 17"><rect x="1" y="1" width="17" height="12" rx="2" stroke="#c8c8c8" stroke-width="1.5" fill="none"/><path d="M5 16 H14" stroke="#c8c8c8" stroke-width="1.5"/><rect x="9" y="7" width="6" height="4" fill="#c8c8c8"/></svg>
<div class="t" style="left:1156px;top:860px;font-size:10px;color:#d9d9d9;font-weight:400;transform:translateX(-50%)">화이트보드</div>
<svg class="a" style="left:1183px;top:844px" width="7" height="5" viewBox="0 0 7 5"><path d="M1 4 L3.5 1.3 L6 4" stroke="#cfcfcf" stroke-width="1.1" fill="none"/></svg>
</body></html>
